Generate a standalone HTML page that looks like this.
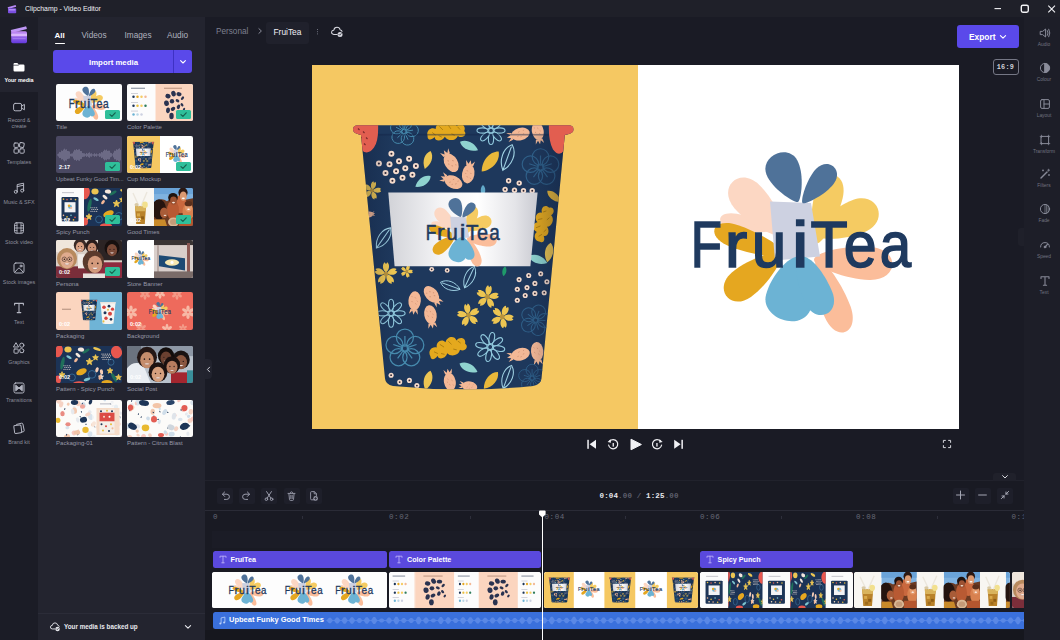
<!DOCTYPE html>
<html>
<head>
<meta charset="utf-8">
<title>Clipchamp - Video Editor</title>
<style>
*{box-sizing:border-box;margin:0;padding:0}
html,body{width:1060px;height:640px;overflow:hidden;background:#1a1b25;font-family:"Liberation Sans",sans-serif;color:#fff}
.abs{position:absolute}
#app{position:relative;width:1060px;height:640px;overflow:hidden;background:#1a1b25}
/* title bar */
#titlebar{left:0;top:0;width:1060px;height:17px;background:#1f2029}
#titlebar .t{left:25px;top:3.8px;font-size:7.6px;line-height:10px;color:#f2f2f6;white-space:nowrap;transform-origin:0 50%;transform:scaleX(.905)}
/* left nav */
#nav{left:0;top:17px;width:38px;height:623px;background:#1b1c26}
#nav .sel{left:0;top:33px;width:38px;height:42px;background:#23242f}
#nav .logo{left:0;top:0;width:38px;height:33px;background:#1d1e28}
.nl{position:absolute;left:-4px;width:46px;text-align:center;font-size:5.4px;line-height:6px;color:#8d8f9c;margin-top:.2px}
.ni{position:absolute;left:12px;width:14px;height:14px}
/* media panel */
#media{left:38px;top:17px;width:167px;height:623px;background:#23242f}
.tab{position:absolute;top:14px;font-size:8.25px;line-height:10px;color:#b0b2bf}
.thumb{position:absolute;width:66px;height:37.5px;border-radius:2px;overflow:hidden}
.tl{position:absolute;font-size:6.05px;line-height:7px;color:#9698a7;white-space:nowrap;margin-top:1px}
.chk{position:absolute;right:2px;bottom:2px;width:15px;height:9px;border-radius:1.5px;background:#2fbf9a}
.dur{position:absolute;left:3px;bottom:2px;font-size:5.5px;line-height:7px;color:#fff;font-weight:bold}
/* header */
#header{left:205px;top:17px;width:819px;height:31px}
/* right bar */
#right{z-index:5;left:1024px;top:17px;width:36px;height:623px;background:#1d1e28}
.rl{position:absolute;left:2px;width:36px;text-align:center;font-size:4.9px;line-height:6px;color:#717380}
.ri{position:absolute;left:14.5px;width:12px;height:12px}
/* preview */
#preview{left:312px;top:64.5px;width:647px;height:364.5px;background:#fff;overflow:hidden}
#preview .y{left:0;top:0;width:326px;height:365px;background:#f5c862}
/* timeline */
#tl{left:205px;top:479.5px;width:819px;height:160.5px;background:#191a23;border-top:1px solid #21222c}
.ttrack{position:absolute;height:17px;border-radius:2.5px;background:#5a49dd;font-weight:bold;font-size:7.2px;line-height:17px;color:#fff;padding-left:18px;white-space:nowrap}
.vtrack{position:absolute;top:572px;height:36px;border-radius:2.5px;overflow:hidden;background:#fff}
.rt{position:absolute;top:512px;font-family:"Liberation Mono",monospace;font-size:7.5px;line-height:10px;color:#666875;letter-spacing:.6px}
</style>
</head>
<body>
<div id="app">


<!-- SHARED SVG DEFS -->
<svg width="0" height="0" style="position:absolute">
<defs>
  <!-- flower logo: local coords = page px relative to (680,140) of big logo -->
  <g id="flower">
    <path d="M0 0 C3.5 0 8.5 -23.1 8.0 -39.6 C7.4 -60.0 -7.4 -60.0 -8.0 -39.6 C-8.5 -23.1 -3.5 0 0 0Z" transform="translate(94 89) rotate(-78.5)" fill="#fcd7c3"/>
    <path d="M0 0 C7.5 0 18.0 -30.7 17.0 -52.6 C15.6 -79.6 -15.6 -79.6 -17.0 -52.6 C-18.0 -30.7 -7.5 0 0 0Z" transform="translate(103 94) rotate(-43.6)" fill="#fcd7c3"/>
    <path d="M0 0 C7.3 0 17.5 -33.1 16.5 -56.7 C15.2 -85.8 -15.2 -85.8 -16.5 -56.7 C-17.5 -33.1 -7.3 0 0 0Z" transform="translate(134 119) rotate(94)" fill="#fbbd9a"/>
    <path d="M0 0 C6.2 0 14.8 -32.8 14.0 -56.2 C12.9 -85.0 -12.9 -85.0 -14.0 -56.2 C-14.8 -32.8 -6.2 0 0 0Z" transform="translate(137.5 118.8) rotate(159)" fill="#fbbd9a"/>
    <path d="M0 0 C7.5 0 18.0 -29.0 17.0 -49.7 C15.6 -75.2 -15.6 -75.2 -17.0 -49.7 C-18.0 -29.0 -7.5 0 0 0Z" transform="translate(134 94) rotate(67.5)" fill="#f5cb62"/>
    <path d="M0 0 C6.2 0 14.8 -29.8 14.0 -51.1 C12.9 -77.4 -12.9 -77.4 -14.0 -51.1 C-14.8 -29.8 -6.2 0 0 0Z" transform="translate(136 103) rotate(15)" fill="#f5cb62"/>
    <path d="M0 0 C5.1 0 12.2 -31.5 11.5 -54.0 C10.6 -81.8 -10.6 -81.8 -11.5 -54.0 C-12.2 -31.5 -5.1 0 0 0Z" transform="translate(105 114) rotate(-70)" fill="#e5a720"/>
    <path d="M0 0 C6.8 0 16.4 -28.6 15.5 -49.0 C14.3 -74.1 -14.3 -74.1 -15.5 -49.0 C-16.4 -28.6 -6.8 0 0 0Z" transform="translate(100 114) rotate(-128)" fill="#e5a720"/>
    <path d="M90 61 L131 62.5 L140 116 L95 120 Z" fill="#cdd1e1"/>
    <path d="M0 0 C14.1 0 24.9 -28.1 23.5 -48.2 C21.6 -73.0 -21.6 -73.0 -23.5 -48.2 C-24.9 -28.1 -14.1 0 0 0Z" transform="translate(124 116) rotate(-161)" fill="#6cb3d4"/>
    <path d="M0 0 C10.1 0 15.4 -26.0 14.5 -44.6 C13.3 -67.6 -13.3 -67.6 -14.5 -44.6 C-15.4 -26.0 -10.1 0 0 0Z" transform="translate(121 117) rotate(156)" fill="#6cb3d4"/>
    <path d="M0 0 C3.4 0 18.0 -22.3 17.0 -38.2 C15.6 -57.8 -15.6 -57.8 -17.0 -38.2 C-18.0 -22.3 -3.4 0 0 0Z" transform="translate(118 61.5) rotate(-25)" fill="#4f7299"/>
    <path d="M0 0 C2.8 0 12.2 -20.2 11.5 -34.6 C10.6 -52.3 -10.6 -52.3 -11.5 -34.6 C-12.2 -20.2 -2.8 0 0 0Z" transform="translate(122.5 62.5) rotate(40)" fill="#4f7299"/>
  </g>

  <!-- pattern elements (unit-ish sizes, centered at 0,0) -->
  <g id="of"><g fill="none" stroke-width=".8">
    <circle cx="0" cy="-7" r="5.5"/><circle cx="6.7" cy="-2.2" r="5.5"/><circle cx="4.1" cy="5.7" r="5.5"/><circle cx="-4.1" cy="5.7" r="5.5"/><circle cx="-6.7" cy="-2.2" r="5.5"/>
    <circle cx="0" cy="0" r="2.2"/><path d="M0-2.5V-8M2.4-.8L7.5-2.5M1.5 2L4.7 6.4M-1.5 2L-4.7 6.4M-2.4-.8L-7.5-2.5"/></g></g>
  <g id="od"><g fill="none" stroke-width="1.1">
    <ellipse cx="0" cy="-8.5" rx="2.6" ry="5.5"/><ellipse cx="0" cy="-8.5" rx="2.6" ry="5.5" transform="rotate(45)"/><ellipse cx="0" cy="-8.5" rx="2.6" ry="5.5" transform="rotate(90)"/><ellipse cx="0" cy="-8.5" rx="2.6" ry="5.5" transform="rotate(135)"/><ellipse cx="0" cy="-8.5" rx="2.6" ry="5.5" transform="rotate(180)"/><ellipse cx="0" cy="-8.5" rx="2.6" ry="5.5" transform="rotate(225)"/><ellipse cx="0" cy="-8.5" rx="2.6" ry="5.5" transform="rotate(270)"/><ellipse cx="0" cy="-8.5" rx="2.6" ry="5.5" transform="rotate(315)"/>
    <circle r="2.4"/></g></g>
  <g id="yf"><g fill="#ecc552"><path d="M0 -1C-4.2 -4.5 -3.6 -10 -1.2 -11.5L0 -9.6L1.2 -11.5C3.6 -10 4.2 -4.5 0 -1Z" transform="rotate(0)"/><path d="M0 -1C-4.2 -4.5 -3.6 -10 -1.2 -11.5L0 -9.6L1.2 -11.5C3.6 -10 4.2 -4.5 0 -1Z" transform="rotate(72)"/><path d="M0 -1C-4.2 -4.5 -3.6 -10 -1.2 -11.5L0 -9.6L1.2 -11.5C3.6 -10 4.2 -4.5 0 -1Z" transform="rotate(144)"/><path d="M0 -1C-4.2 -4.5 -3.6 -10 -1.2 -11.5L0 -9.6L1.2 -11.5C3.6 -10 4.2 -4.5 0 -1Z" transform="rotate(216)"/><path d="M0 -1C-4.2 -4.5 -3.6 -10 -1.2 -11.5L0 -9.6L1.2 -11.5C3.6 -10 4.2 -4.5 0 -1Z" transform="rotate(288)"/></g><circle r="2.4" fill="#b8933c"/></g>
  <g id="pf"><ellipse cx="0" cy="1.5" rx="6.2" ry="9.5" fill="#f3b896"/><path d="M-3.5-7L-4.5-12L-1.5-8.5L0-12.5L1.5-8.5L4.5-12L3.5-7Z" fill="#f3b896"/><path d="M-2-2l1 1M2 0l1 1M-1 4l1 1M2.5 5l.8 .8M-3 1l.8 .8" stroke="#c98a6c" stroke-width=".7"/></g>
  <g id="gg"><path d="M-19 3C-20-3-14-6-10-3C-9-9-2-10 0-5C3-10 11-9 11-3C16-6 21-2 18 3C21 7 15 11 11 7C8 12 0 11 -2 6C-6 11-13 9-12 5C-16 8-20 7-19 3Z" fill="#e4a91e"/><path d="M-14 0l3 3M-6-5l3 4M3-5l2 4M12-2l2 3M-8 4l3 2M5 4l3 2" stroke="#a87a10" stroke-width=".8" fill="none"/></g>
  <g id="dot"><circle r="3" fill="#f6dccd"/><circle r="1.05" fill="#2c2433"/></g>
  <path id="lf" d="M0-11C6-6 6 4 0 11C-6 4-6-6 0-11Z"/>
  <path id="ol" d="M0-13C7-7 7 5 0 13C-7 5-7-7 0-13ZM0-11V13" fill="none" stroke-width="1.1"/>
  <g id="ltext"><g font-family="Liberation Sans, sans-serif" font-size="65" fill="#1f3a5f" stroke="#1f3a5f" stroke-width="1.6">
    <text transform="translate(10.63 126.6) scale(0.786 1)">F</text><text transform="translate(44.72 126.6) scale(1.043 1)">r</text><text transform="translate(71.78 126.6) scale(0.957 1)">u</text><text transform="translate(111.76 126.6) scale(1.172 1)">i</text><text transform="translate(130.39 126.6) scale(0.937 1)">T</text><text transform="translate(163.85 126.6) scale(0.911 1)">e</text><text transform="translate(199.87 126.6) scale(0.868 1)">a</text>
    </g></g>
  <g id="logo"><use href="#flower"/><use href="#ltext"/></g>
</defs>
</svg>

<!-- TITLEBAR -->
<div id="titlebar" class="abs">
  <svg class="abs" style="left:7px;top:4px" width="10" height="10" viewBox="0 0 10 10"><path d="M0.6 3.2L8.6 1L9.2 2.8L1.2 5Z" fill="#b98af5"/><rect x="1" y="4.2" width="8.2" height="5" rx=".8" fill="#7a4fe0"/><rect x="1.8" y="5.3" width="6.6" height="1.1" fill="#c8a4ff"/></svg>
  <div class="abs t">Clipchamp - Video Editor</div>
  <svg class="abs" style="left:990px;top:3px" width="70" height="12" viewBox="990 3 70 12" fill="none" stroke="#f2f2f5" stroke-width="1.1"><path d="M994.5 8.6H1001"/><rect x="1021.3" y="5.2" width="7" height="7" rx="1.6" stroke-width="1.4"/><path d="M1048.3 5.6L1055 12.3M1055 5.6L1048.3 12.3"/></svg>
</div>

<!-- LEFT NAV -->
<div id="nav" class="abs">
  <div class="abs logo"><svg class="abs" style="left:10px;top:8px" width="18" height="19" viewBox="0 0 18 19"><defs><linearGradient id="lg1" x1="0" y1="0" x2="0" y2="1"><stop offset="0" stop-color="#c58df4"/><stop offset="1" stop-color="#6238dc"/></linearGradient></defs><path d="M.8 4.9L15.4 1.4Q16.2 1.2 16.4 2L16.9 4.1L1.5 7.9Z" fill="#bf97f6"/><rect x="1.2" y="6.2" width="15.8" height="12" rx="1.6" fill="url(#lg1)"/><rect x="1.2" y="8.6" width="15.8" height="2.6" fill="#e3c2ff" opacity=".85"/><rect x="2.6" y="13" width="13" height="1.2" fill="#b48af5" opacity=".6"/></svg></div>
  <div class="abs sel"></div>
  <svg class="ni" style="top:43px" viewBox="0 0 14 14" fill="none" stroke="#ffffff" stroke-width="1" stroke-linecap="round" stroke-linejoin="round"><path d="M1.5 4.2Q1.5 3 2.7 3H5.3L6.8 4.6H11.3Q12.5 4.6 12.5 5.8V10.3Q12.5 11.5 11.3 11.5H2.7Q1.5 11.5 1.5 10.3Z" fill="#fff" stroke="none"/><path d="M1.5 5.2H6.2L7.2 4.4" stroke="#23242f" stroke-width=".7"/></svg>
  <div class="nl" style="top:59.8px;color:#fff;font-weight:bold;">Your media</div>
  <svg class="ni" style="top:83px" viewBox="0 0 14 14" fill="none" stroke="#b4b6c2" stroke-width="1" stroke-linecap="round" stroke-linejoin="round"><rect x="1.6" y="3.4" width="8" height="7.4" rx="1.6"/><path d="M9.6 6.1L12.4 4.4V9.8L9.6 8.1"/></svg>
  <div class="nl" style="top:99.4px;">Record &amp;<br>create</div>
  <svg class="ni" style="top:124px" viewBox="0 0 14 14" fill="none" stroke="#b4b6c2" stroke-width="1" stroke-linecap="round" stroke-linejoin="round"><rect x="2" y="2" width="4.4" height="4.4" rx="1"/><rect x="2" y="7.8" width="4.4" height="4.4" rx="1"/><rect x="7.8" y="7.8" width="4.4" height="4.4" rx="1"/><rect x="7.6" y="1.8" width="4.4" height="4.4" rx="1" transform="rotate(12 9.8 4)"/></svg>
  <div class="nl" style="top:142px;">Templates</div>
  <svg class="ni" style="top:164px" viewBox="0 0 14 14" fill="none" stroke="#b4b6c2" stroke-width="1" stroke-linecap="round" stroke-linejoin="round"><path d="M5.2 10.6V3.6L11.6 2.2V9.4"/><circle cx="3.8" cy="10.8" r="1.5"/><circle cx="10.2" cy="9.6" r="1.5"/><path d="M5.2 5.6L11.6 4.2"/></svg>
  <div class="nl" style="top:182px;">Music &amp; SFX</div>
  <svg class="ni" style="top:204px" viewBox="0 0 14 14" fill="none" stroke="#b4b6c2" stroke-width="1" stroke-linecap="round" stroke-linejoin="round"><rect x="2.6" y="1.8" width="8.8" height="10.4" rx="1.6"/><path d="M5 1.8V12.2M9 1.8V12.2M5 7H9M2.6 4.4H5M2.6 7H5M2.6 9.6H5M9 4.4H11.4M9 7H11.4M9 9.6H11.4" stroke-width=".8"/></svg>
  <div class="nl" style="top:222px;">Stock video</div>
  <svg class="ni" style="top:244px" viewBox="0 0 14 14" fill="none" stroke="#b4b6c2" stroke-width="1" stroke-linecap="round" stroke-linejoin="round"><rect x="2" y="2" width="10" height="10" rx="1.8"/><circle cx="9" cy="5" r="1"/><path d="M3 11L6.2 7.4Q7 6.6 7.8 7.4L11 11"/></svg>
  <div class="nl" style="top:262px;">Stock images</div>
  <svg class="ni" style="top:284px" viewBox="0 0 14 14" fill="none" stroke="#b4b6c2" stroke-width="1" stroke-linecap="round" stroke-linejoin="round"><path d="M2.6 4V2.4H11.4V4M7 2.4V11.6M5.2 11.6H8.8" stroke-width="1.1"/></svg>
  <div class="nl" style="top:302px;">Text</div>
  <svg class="ni" style="top:324px" viewBox="0 0 14 14" fill="none" stroke="#b4b6c2" stroke-width="1" stroke-linecap="round" stroke-linejoin="round"><path d="M4.2 2L6.6 6H1.8Z"/><circle cx="9.8" cy="4.2" r="2.1"/><rect x="2" y="8" width="4.2" height="4.2" rx=".8"/><path d="M9.8 7.6L12 9L11.2 11.6H8.4L7.6 9Z"/></svg>
  <div class="nl" style="top:342px;">Graphics</div>
  <svg class="ni" style="top:364px" viewBox="0 0 14 14" fill="none" stroke="#b4b6c2" stroke-width="1" stroke-linecap="round" stroke-linejoin="round"><rect x="2" y="2" width="10" height="10" rx="1.6"/><path d="M4 4.4L7 7L4 9.6ZM10 4.4L7 7L10 9.6Z" fill="#b4b6c2"/></svg>
  <div class="nl" style="top:380px;">Transitions</div>
  <svg class="ni" style="top:404px" viewBox="0 0 14 14" fill="none" stroke="#b4b6c2" stroke-width="1" stroke-linecap="round" stroke-linejoin="round"><path d="M4.6 3.4L9.6 2.2Q10.6 2 10.9 3L12.2 9.4Q12.4 10.4 11.4 10.7L9.8 11"/><rect x="2.2" y="4.2" width="7.2" height="8" rx="1.2" transform="rotate(-8 5.8 8.2)"/></svg>
  <div class="nl" style="top:422px;">Brand kit</div>
</div>

<!-- MEDIA PANEL -->
<svg width="0" height="0" style="position:absolute"><defs>
  <symbol id="t_logo" viewBox="0 0 66 37.5" preserveAspectRatio="none"><rect width="66" height="37.5" fill="#fdfdfd"/><use href="#logo" transform="translate(10.92 0.48) scale(0.181)"/></symbol>
  <symbol id="t_pal" viewBox="0 0 66 37.5" preserveAspectRatio="none"><rect width="66" height="37.5" fill="#fcfcfc"/><rect x="28.5" width="37.5" height="37.5" fill="#fbd5bf"/><rect x="4" y="3.6" width="14" height="1.3" fill="#9aa0ad"/><rect x="37" y="3.6" width="18" height="1.3" fill="#c9a08c"/><circle cx="6.5" cy="12.5" r="1.25" fill="#1d3557"/><circle cx="10.5" cy="12.5" r="1.25" fill="#e5a720"/><circle cx="14.5" cy="12.5" r="1.25" fill="#f5cb62"/><circle cx="18.5" cy="12.5" r="1.25" fill="#f3b896"/><circle cx="6.5" cy="21.5" r="1.25" fill="#1d3557"/><circle cx="10.5" cy="21.5" r="1.25" fill="#e8bf3f"/><circle cx="14.5" cy="21.5" r="1.25" fill="#f5cb62"/><circle cx="18.5" cy="21.5" r="1.25" fill="#2f7d5b"/><circle cx="6.5" cy="30" r="1.25" fill="#6cb3d4"/><circle cx="10.5" cy="30" r="1.25" fill="#b9d7e6"/><circle cx="14.5" cy="30" r="1.25" fill="#cdd1e1"/><rect x="4" y="9" width="7" height=".8" fill="#c6c8d0"/><rect x="4" y="17.8" width="7" height=".8" fill="#c6c8d0"/><rect x="4" y="26.3" width="7" height=".8" fill="#c6c8d0"/><ellipse cx="41" cy="12" rx="2.6" ry="2.2" transform="rotate(20 41 12)" fill="#2a3350"/><ellipse cx="46.5" cy="9.5" rx="2.2" ry="2.8" transform="rotate(-20 46.5 9.5)" fill="#2a3350"/><ellipse cx="52" cy="10" rx="2.6" ry="2" transform="rotate(10 52 10)" fill="#2a3350"/><ellipse cx="39.5" cy="19" rx="2.4" ry="2.8" transform="rotate(-10 39.5 19)" fill="#2a3350"/><ellipse cx="45" cy="17" rx="2.2" ry="2.2" transform="rotate(0 45 17)" fill="#2a3350"/><ellipse cx="50.5" cy="16.5" rx="2" ry="1.4" transform="rotate(30 50.5 16.5)" fill="#2a3350"/><ellipse cx="55.5" cy="14" rx="1.2" ry="2" transform="rotate(40 55.5 14)" fill="#2a3350"/><ellipse cx="41" cy="26" rx="2" ry="2.8" transform="rotate(10 41 26)" fill="#2a3350"/><ellipse cx="46" cy="24.5" rx="2.4" ry="1.8" transform="rotate(-30 46 24.5)" fill="#2a3350"/><ellipse cx="51.5" cy="22.5" rx="1.6" ry="2.4" transform="rotate(20 51.5 22.5)" fill="#2a3350"/><ellipse cx="44.5" cy="31.5" rx="2.2" ry="3.2" transform="rotate(0 44.5 31.5)" fill="#2a3350"/><ellipse cx="55" cy="20.5" rx="1.2" ry="1.8" transform="rotate(-40 55 20.5)" fill="#2a3350"/><ellipse cx="57" cy="25" rx="1" ry="1.6" transform="rotate(30 57 25)" fill="#2a3350"/></symbol>
  <symbol id="t_audio" viewBox="0 0 66 37.5" preserveAspectRatio="none"><rect width="66" height="37.5" fill="#4a4862"/><rect x="1.0" y="18.1" width="1" height="1.2" fill="#6c6a85"/><rect x="2.0" y="17.3" width="1" height="3.0" fill="#6c6a85"/><rect x="3.0" y="15.7" width="1" height="6.1" fill="#6c6a85"/><rect x="4.0" y="15.9" width="1" height="5.8" fill="#6c6a85"/><rect x="5.0" y="14.3" width="1" height="8.9" fill="#6c6a85"/><rect x="6.0" y="14.7" width="1" height="8.2" fill="#6c6a85"/><rect x="7.0" y="13.4" width="1" height="10.6" fill="#6c6a85"/><rect x="8.0" y="12.5" width="1" height="12.6" fill="#6c6a85"/><rect x="9.0" y="13.5" width="1" height="10.5" fill="#6c6a85"/><rect x="10.0" y="13.1" width="1" height="11.2" fill="#6c6a85"/><rect x="11.0" y="14.8" width="1" height="7.9" fill="#6c6a85"/><rect x="12.0" y="14.9" width="1" height="7.6" fill="#6c6a85"/><rect x="13.0" y="15.3" width="1" height="6.9" fill="#6c6a85"/><rect x="14.0" y="17.6" width="1" height="2.4" fill="#6c6a85"/><rect x="15.0" y="17.3" width="1" height="3.0" fill="#6c6a85"/><rect x="16.0" y="17.1" width="1" height="3.3" fill="#6c6a85"/><rect x="17.0" y="15.3" width="1" height="7.0" fill="#6c6a85"/><rect x="18.0" y="13.6" width="1" height="10.2" fill="#6c6a85"/><rect x="19.0" y="14.0" width="1" height="9.5" fill="#6c6a85"/><rect x="20.0" y="12.9" width="1" height="11.7" fill="#6c6a85"/><rect x="21.0" y="13.8" width="1" height="9.8" fill="#6c6a85"/><rect x="22.0" y="13.3" width="1" height="10.9" fill="#6c6a85"/><rect x="23.0" y="13.1" width="1" height="11.4" fill="#6c6a85"/><rect x="24.0" y="14.8" width="1" height="8.0" fill="#6c6a85"/><rect x="25.0" y="14.9" width="1" height="7.7" fill="#6c6a85"/><rect x="26.0" y="16.8" width="1" height="3.9" fill="#6c6a85"/><rect x="27.0" y="17.0" width="1" height="3.5" fill="#6c6a85"/><rect x="28.0" y="17.1" width="1" height="3.3" fill="#6c6a85"/><rect x="29.0" y="17.9" width="1" height="1.6" fill="#6c6a85"/><rect x="30.0" y="16.7" width="1" height="4.0" fill="#6c6a85"/><rect x="31.0" y="17.5" width="1" height="2.5" fill="#6c6a85"/><rect x="32.0" y="16.7" width="1" height="4.2" fill="#6c6a85"/><rect x="33.0" y="16.1" width="1" height="5.4" fill="#6c6a85"/><rect x="34.0" y="17.4" width="1" height="2.8" fill="#6c6a85"/><rect x="35.0" y="17.0" width="1" height="3.5" fill="#6c6a85"/><rect x="36.0" y="18.1" width="1" height="1.2" fill="#6c6a85"/><rect x="37.0" y="18.0" width="1" height="1.5" fill="#6c6a85"/><rect x="38.0" y="17.0" width="1" height="3.5" fill="#6c6a85"/><rect x="39.0" y="17.9" width="1" height="1.8" fill="#6c6a85"/><rect x="40.0" y="17.2" width="1" height="3.2" fill="#6c6a85"/><rect x="41.0" y="18.1" width="1" height="1.2" fill="#6c6a85"/><rect x="42.0" y="18.0" width="1" height="1.4" fill="#6c6a85"/><rect x="43.0" y="16.8" width="1" height="3.9" fill="#6c6a85"/><rect x="44.0" y="17.2" width="1" height="3.1" fill="#6c6a85"/><rect x="45.0" y="15.8" width="1" height="6.0" fill="#6c6a85"/><rect x="46.0" y="16.1" width="1" height="5.3" fill="#6c6a85"/><rect x="47.0" y="14.7" width="1" height="8.1" fill="#6c6a85"/><rect x="48.0" y="13.5" width="1" height="10.5" fill="#6c6a85"/><rect x="49.0" y="14.2" width="1" height="9.1" fill="#6c6a85"/><rect x="50.0" y="13.4" width="1" height="10.6" fill="#6c6a85"/><rect x="51.0" y="14.7" width="1" height="8.1" fill="#6c6a85"/><rect x="52.0" y="14.5" width="1" height="8.6" fill="#6c6a85"/><rect x="53.0" y="14.5" width="1" height="8.5" fill="#6c6a85"/><rect x="54.0" y="16.5" width="1" height="4.5" fill="#6c6a85"/><rect x="55.0" y="16.9" width="1" height="3.6" fill="#6c6a85"/><rect x="56.0" y="18.1" width="1" height="1.2" fill="#6c6a85"/><rect x="57.0" y="16.4" width="1" height="4.8" fill="#6c6a85"/><rect x="58.0" y="14.5" width="1" height="8.5" fill="#6c6a85"/><rect x="59.0" y="14.6" width="1" height="8.4" fill="#6c6a85"/><rect x="60.0" y="13.1" width="1" height="11.4" fill="#6c6a85"/><rect x="61.0" y="13.6" width="1" height="10.3" fill="#6c6a85"/><rect x="62.0" y="12.7" width="1" height="12.1" fill="#6c6a85"/><rect x="63.0" y="12.1" width="1" height="13.3" fill="#6c6a85"/><rect x="64.0" y="13.6" width="1" height="10.4" fill="#6c6a85"/></symbol>
  <symbol id="t_cupm" viewBox="0 0 66 37.5" preserveAspectRatio="none"><rect width="66" height="37.5" fill="#fff"/><rect width="33" height="37.5" fill="#f5c862"/><use href="#cup" transform="translate(5.4 5.6) scale(0.1) translate(-353 -124.6)"/><use href="#logo" transform="translate(37.60 7.60) scale(0.1)"/></symbol>
  <symbol id="t_spicy" viewBox="0 0 66 37.5" preserveAspectRatio="none"><g transform="translate(27 0)"><rect width="66" height="37.5" fill="#1c3356"/><ellipse cx="2.5" cy="5" rx="4.2" ry="6.2" transform="rotate(15 2.5 5)" fill="#e8574e"/><ellipse cx="60.5" cy="6" rx="5.5" ry="6.2" transform="rotate(-15 60.5 6)" fill="#e8574e"/><ellipse cx="23" cy="37" rx="6" ry="2.2" transform="rotate(0 23 37)" fill="#e8574e"/><ellipse cx="2" cy="33" rx="3" ry="4" transform="rotate(0 2 33)" fill="#e8574e"/><ellipse cx="6.5" cy="17" rx="1.8" ry="6.5" transform="rotate(12 6.5 17)" fill="#1f6f5a"/><ellipse cx="58" cy="31" rx="1.6" ry="5" transform="rotate(-30 58 31)" fill="#1f6f5a"/><ellipse cx="30" cy="5" rx="1.4" ry="4" transform="rotate(60 30 5)" fill="#1f6f5a"/><ellipse cx="12" cy="3.5" rx="3.6" ry="3" transform="rotate(0 12 3.5)" fill="#ecc552"/><ellipse cx="25.5" cy="25.5" rx="5.5" ry="3" transform="rotate(-22 25.5 25.5)" fill="#e5a720"/><ellipse cx="51" cy="36" rx="5.5" ry="2.4" transform="rotate(0 51 36)" fill="#e5a720"/><ellipse cx="41" cy="3" rx="4" ry="1.4" transform="rotate(20 41 3)" fill="#ecc552"/><path d="M33.5 11.9 L34.5 14.2 L36.9 14.4 L35.0 16.0 L35.6 18.4 L33.5 17.1 L31.4 18.4 L32.0 16.0 L30.1 14.4 L32.5 14.2Z" fill="#ecc552" stroke="#ecc552" stroke-width=".8" stroke-linejoin="round"/><path d="M39.5 8.5 L40.3 10.4 L42.4 10.6 L40.8 11.9 L41.3 13.9 L39.5 12.8 L37.7 13.9 L38.2 11.9 L36.6 10.6 L38.7 10.4Z" fill="#ecc552" stroke="#ecc552" stroke-width=".8" stroke-linejoin="round"/><path d="M6.0 25.3 L6.8 27.3 L9.0 27.5 L7.4 28.9 L7.9 31.1 L6.0 29.9 L4.1 31.1 L4.6 28.9 L3.0 27.5 L5.2 27.3Z" fill="#ecc552" stroke="#ecc552" stroke-width=".8" stroke-linejoin="round"/><path d="M54.0 21.5 L54.8 23.4 L56.9 23.6 L55.3 24.9 L55.8 26.9 L54.0 25.9 L52.2 26.9 L52.7 24.9 L51.1 23.6 L53.2 23.4Z" fill="#ecc552" stroke="#ecc552" stroke-width=".8" stroke-linejoin="round"/><path d="M62.5 28.0 L63.3 29.9 L65.4 30.1 L63.8 31.4 L64.3 33.4 L62.5 32.4 L60.7 33.4 L61.2 31.4 L59.6 30.1 L61.7 29.9Z" fill="#ecc552" stroke="#ecc552" stroke-width=".8" stroke-linejoin="round"/><path d="M45.0 27.9 L45.7 29.6 L47.5 29.7 L46.1 30.9 L46.5 32.6 L45.0 31.7 L43.5 32.6 L43.9 30.9 L42.5 29.7 L44.3 29.6Z" fill="#f3e6dc" stroke="#f3e6dc" stroke-width=".8" stroke-linejoin="round"/><ellipse cx="41" cy="23.5" rx="1.6" ry="2.6" transform="rotate(20 41 23.5)" fill="#f6cdb6"/><ellipse cx="45.5" cy="25.5" rx="1.6" ry="2.6" transform="rotate(-10 45.5 25.5)" fill="#f6cdb6"/><ellipse cx="44" cy="31" rx="1.5" ry="2.4" transform="rotate(10 44 31)" fill="#f3b896"/><ellipse cx="20" cy="14" rx="1.4" ry="2.4" transform="rotate(40 20 14)" fill="#f3b896"/><ellipse cx="25" cy="3.5" rx="3.2" ry="2" transform="rotate(10 25 3.5)" fill="#f3e6dc"/><ellipse cx="22" cy="9" rx="1.5" ry="3" transform="rotate(-50 22 9)" fill="#f3e6dc"/><circle cx="46.0" cy="8.0" r="0.55" fill="#f3e6dc"/><circle cx="47.0" cy="9.7" r="0.55" fill="#f3e6dc"/><circle cx="46.0" cy="11.4" r="0.55" fill="#f3e6dc"/><circle cx="47.0" cy="13.1" r="0.55" fill="#f3e6dc"/><circle cx="47.9" cy="8.0" r="0.55" fill="#f3e6dc"/><circle cx="48.9" cy="9.7" r="0.55" fill="#f3e6dc"/><circle cx="47.9" cy="11.4" r="0.55" fill="#f3e6dc"/><circle cx="48.9" cy="13.1" r="0.55" fill="#f3e6dc"/><circle cx="49.8" cy="8.0" r="0.55" fill="#f3e6dc"/><circle cx="50.8" cy="9.7" r="0.55" fill="#f3e6dc"/><circle cx="49.8" cy="11.4" r="0.55" fill="#f3e6dc"/><circle cx="50.8" cy="13.1" r="0.55" fill="#f3e6dc"/><circle cx="51.7" cy="8.0" r="0.55" fill="#f3e6dc"/><circle cx="52.7" cy="9.7" r="0.55" fill="#f3e6dc"/><circle cx="51.7" cy="11.4" r="0.55" fill="#f3e6dc"/><circle cx="52.7" cy="13.1" r="0.55" fill="#f3e6dc"/><circle cx="53.6" cy="8.0" r="0.55" fill="#f3e6dc"/><circle cx="54.6" cy="9.7" r="0.55" fill="#f3e6dc"/><circle cx="53.6" cy="11.4" r="0.55" fill="#f3e6dc"/><circle cx="54.6" cy="13.1" r="0.55" fill="#f3e6dc"/><circle cx="8.0" cy="19.5" r="0.55" fill="#f3e6dc"/><circle cx="8.9" cy="21.2" r="0.55" fill="#f3e6dc"/><circle cx="8.0" cy="22.9" r="0.55" fill="#f3e6dc"/><circle cx="9.9" cy="19.5" r="0.55" fill="#f3e6dc"/><circle cx="10.8" cy="21.2" r="0.55" fill="#f3e6dc"/><circle cx="9.9" cy="22.9" r="0.55" fill="#f3e6dc"/><circle cx="11.8" cy="19.5" r="0.55" fill="#f3e6dc"/><circle cx="12.8" cy="21.2" r="0.55" fill="#f3e6dc"/><circle cx="11.8" cy="22.9" r="0.55" fill="#f3e6dc"/><circle cx="13.7" cy="19.5" r="0.55" fill="#f3e6dc"/><circle cx="14.6" cy="21.2" r="0.55" fill="#f3e6dc"/><circle cx="13.7" cy="22.9" r="0.55" fill="#f3e6dc"/><circle cx="36" cy="28" r="3.8" fill="none" stroke="#3f7aa6" stroke-width=".7"/><circle cx="16" cy="31" r="3.4" fill="none" stroke="#3f7aa6" stroke-width=".7"/><circle cx="55" cy="16" r="3" fill="none" stroke="#3f7aa6" stroke-width=".7"/><ellipse cx="31" cy="33" rx="3.4" ry="1.4" transform="rotate(-20 31 33)" fill="#7ec4cf"/><ellipse cx="13" cy="11" rx="3" ry="1.2" transform="rotate(30 13 11)" fill="#7ec4cf"/></g><rect width="28" height="37.5" fill="#fbfbfb"/><rect x="6" y="4" width="12" height="1.1" fill="#c9c9cf"/><rect x="5.5" y="9" width="17" height="24" rx="1" fill="#1d3557"/><rect x="8.5" y="14" width="11" height="10" fill="#f3f3f5"/><circle cx="7.5" cy="11" r=".8" fill="#e8bf3f"/><circle cx="11" cy="11.5" r=".8" fill="#e15a4f"/><circle cx="15" cy="11" r=".8" fill="#f3b896"/><circle cx="19.5" cy="11.5" r=".8" fill="#e8bf3f"/><circle cx="7.5" cy="27" r=".8" fill="#f3b896"/><circle cx="11" cy="28.5" r=".8" fill="#e8bf3f"/><circle cx="15" cy="27" r=".8" fill="#7ec4cf"/><circle cx="19" cy="29" r=".8" fill="#e15a4f"/><circle cx="9" cy="31" r=".8" fill="#f6e3c8"/><circle cx="13" cy="31.2" r=".8" fill="#f3b896"/><circle cx="17.5" cy="31.5" r=".8" fill="#e8bf3f"/><circle cx="14" cy="18.5" r="2" fill="#6cb3d4"/><circle cx="13" cy="17.6" r="1.2" fill="#e5a720"/><circle cx="15.2" cy="19.6" r="1.1" fill="#fbbd9a"/></symbol>
  <symbol id="t_good" viewBox="0 0 66 37.5" preserveAspectRatio="none"><rect x="27" width="39" height="37.5" fill="#7fb2e0"/><rect x="27" y="0" width="39" height="6" fill="#6aa3d8"/><path d="M27 14Q34 9 40 13L46 9L56 12L66 10V37.5H27Z" fill="#6b3a22"/><ellipse cx="53.5" cy="16" rx="6" ry="9" transform="rotate(0 53.5 16)" fill="#c9683e"/><ellipse cx="46" cy="22" rx="6" ry="10" transform="rotate(0 46 22)" fill="#b85a33"/><ellipse cx="61" cy="24" rx="5.5" ry="9" transform="rotate(0 61 24)" fill="#d8814f"/><ellipse cx="56" cy="4.5" rx="4.6" ry="5" transform="rotate(0 56 4.5)" fill="#2a1712"/><ellipse cx="56.3" cy="8" rx="3.5" ry="4.6" transform="rotate(0 56.3 8)" fill="#dc9a72"/><ellipse cx="56.3" cy="10.2" rx="1.6" ry="0.8" transform="rotate(0 56.3 10.2)" fill="#fff"/><ellipse cx="46" cy="9.5" rx="4.8" ry="4.6" transform="rotate(0 46 9.5)" fill="#1f120e"/><ellipse cx="46.5" cy="12.5" rx="3.4" ry="4" transform="rotate(0 46.5 12.5)" fill="#9c5232"/><ellipse cx="46.5" cy="14.4" rx="1.5" ry="0.8" transform="rotate(0 46.5 14.4)" fill="#f4e6da"/><ellipse cx="32" cy="21" rx="7" ry="10" transform="rotate(0 32 21)" fill="#24140f"/><ellipse cx="37" cy="24.5" rx="4" ry="5.2" transform="rotate(0 37 24.5)" fill="#a85c38"/><ellipse cx="38" cy="27" rx="1.4" ry="0.7" transform="rotate(0 38 27)" fill="#f4e6da"/><ellipse cx="61.5" cy="19" rx="3.4" ry="4.4" transform="rotate(0 61.5 19)" fill="#e39a6c"/><ellipse cx="61.5" cy="15.5" rx="3.8" ry="2.6" transform="rotate(0 61.5 15.5)" fill="#5a2f1c"/><ellipse cx="61.5" cy="21" rx="1.3" ry="0.7" transform="rotate(0 61.5 21)" fill="#fff"/><path d="M27 31H38L40 37.5H27Z" fill="#c98a2a"/><ellipse cx="46.5" cy="33.5" rx="5.5" ry="4.5" transform="rotate(0 46.5 33.5)" fill="#d9b896"/><ellipse cx="46.5" cy="33.5" rx="3.5" ry="2.8" transform="rotate(0 46.5 33.5)" fill="#c49a78"/><rect x="52" y="30" width="14" height="7.5" fill="#b4562f"/><rect width="27" height="37.5" fill="#f8f6f2"/><path d="M8 18H19L17.8 35.5H9.2Z" fill="#b9822a"/><path d="M8 18H19L18.6 23H8.4Z" fill="#d9b35c"/><rect x="10" y="25" width="3" height="3" fill="#d9a94a"/><rect x="14" y="28" width="3" height="3" fill="#8f5e16"/><rect x="11" y="31" width="3" height="3" fill="#9c6a1c"/><path d="M6 5L12 18M20 4L14 18" stroke="#ebe6dc" stroke-width="1.4"/><ellipse cx="18" cy="16.5" rx="2.8" ry="3.2" transform="rotate(0 18 16.5)" fill="#f2e08e"/><ellipse cx="9.5" cy="16.5" rx="2" ry="1.6" transform="rotate(0 9.5 16.5)" fill="#d8c9a6"/></symbol>
  <symbol id="t_persona" viewBox="0 0 66 37.5" preserveAspectRatio="none"><rect width="66" height="37.5" fill="#d9cfc6"/><rect x="42" width="24" height="20" fill="#2c2424"/><rect y="0" width="20" height="12" fill="#efe6dc"/><ellipse cx="24.0" cy="5.2" rx="6.2" ry="6.5" fill="#3a2a26"/><ellipse cx="24" cy="7" rx="4.2" ry="5.0" fill="#d9a184"/><path d="M22.2 9.0Q24 10.8 25.8 9.0" fill="#fff" stroke="#7a3b36" stroke-width=".3"/><circle cx="22.4" cy="6.4" r="0.50" fill="#2a1a18"/><circle cx="25.6" cy="6.4" r="0.50" fill="#2a1a18"/><ellipse cx="36.0" cy="6.2" rx="6.5" ry="6.8" fill="#2a1c1a"/><ellipse cx="36" cy="8" rx="4.4" ry="5.2" fill="#c98f72"/><path d="M34.2 10.1Q36 11.9 37.8 10.1" fill="#fff" stroke="#7a3b36" stroke-width=".3"/><circle cx="34.3" cy="7.4" r="0.52" fill="#2a1a18"/><circle cx="37.7" cy="7.4" r="0.52" fill="#2a1a18"/><ellipse cx="56.0" cy="7.9" rx="7.5" ry="7.8" fill="#17100f"/><ellipse cx="56" cy="10" rx="5.1" ry="6.0" fill="#7a4a38"/><path d="M53.9 12.4Q56 14.5 58.1 12.4" fill="#fff" stroke="#7a3b36" stroke-width=".3"/><circle cx="54.0" cy="9.3" r="0.60" fill="#2a1a18"/><circle cx="58.0" cy="9.3" r="0.60" fill="#2a1a18"/><rect x="0" y="26" width="66" height="12" fill="#7b2e3a"/><rect x="44" y="22" width="22" height="16" fill="#8e2b3f"/><rect x="22" y="14" width="10" height="14" fill="#f1ece8"/><ellipse cx="11.0" cy="18.4" rx="10.0" ry="10.4" fill="#b88a5e"/><ellipse cx="11" cy="20" rx="6.8" ry="8.0" fill="#e0ab8e"/><path d="M8.2 23.2Q11 26.0 13.8 23.2" fill="#fff" stroke="#7a3b36" stroke-width=".3"/><circle cx="8.4" cy="19.0" r="0.80" fill="#2a1a18"/><circle cx="13.6" cy="19.0" r="0.80" fill="#2a1a18"/><circle cx="8.3" cy="19" r="2.2" fill="none" stroke="#2a1a18" stroke-width=".5"/><circle cx="13.7" cy="19" r="2.2" fill="none" stroke="#2a1a18" stroke-width=".5"/><ellipse cx="37.3" cy="21.4" rx="10.6" ry="11.1" fill="#5a3a2c"/><ellipse cx="39" cy="24" rx="7.2" ry="8.5" fill="#d39a7c"/><path d="M36.0 27.4Q39 30.4 42.0 27.4" fill="#fff" stroke="#7a3b36" stroke-width=".3"/><circle cx="36.2" cy="23.0" r="0.85" fill="#2a1a18"/><circle cx="41.8" cy="23.0" r="0.85" fill="#2a1a18"/><rect x="27" y="33" width="22" height="5" fill="#e8e1dc"/></symbol>
  <symbol id="t_store" viewBox="0 0 66 37.5" preserveAspectRatio="none"><rect width="66" height="37.5" fill="#fff"/><use href="#logo" transform="translate(3.63 9.16) scale(0.085)"/><rect x="27" width="39" height="37.5" fill="#d9cfcb"/><rect x="27" width="39" height="5" fill="#3a3434"/><rect x="30" y="5" width="2" height="33" fill="#b9a9a4"/><rect x="60" y="3" width="3" height="35" fill="#8d5a55"/><rect x="27" y="31" width="39" height="7" fill="#7a6b68"/><path d="M32 15L58 18V30L32 26Z" fill="#1d4a74"/><ellipse cx="45" cy="22.2" rx="7" ry="3.2" fill="#f6e7b0"/><circle cx="45" cy="22.2" r="1.6" fill="#fff"/></symbol>
  <symbol id="t_pack" viewBox="0 0 66 37.5" preserveAspectRatio="none"><rect width="66" height="37.5" fill="#fbd5bf"/><rect x="33.5" width="32.5" height="37.5" fill="#6fb4d6"/><rect x="6" y="16.5" width="9" height="1" fill="#b08d7c"/><use href="#cup" transform="translate(24.5 7.5) scale(0.078) translate(-353 -124.6)"/><path d="M44.5 10.5H59.5L57.5 31Q52 32.4 46.5 31Z" fill="#f7f4f0"/><rect x="44" y="9.8" width="16" height="1.6" rx=".8" fill="#e9e4de"/><circle cx="48" cy="15" r="1.8" fill="#d8453f"/><circle cx="53" cy="14" r="1.4" fill="#1d3557"/><circle cx="56.5" cy="17" r="1.6" fill="#d8453f"/><circle cx="49" cy="20.5" r="1.5" fill="#1d3557"/><circle cx="54" cy="21.5" r="2" fill="#d8453f"/><circle cx="50" cy="26" r="1.7" fill="#d8453f"/><circle cx="55" cy="27" r="1.3" fill="#1d3557"/><circle cx="47.5" cy="29" r="1" fill="#e8bf3f"/><circle cx="52" cy="17.5" r="1" fill="#e8bf3f"/></symbol>
  <symbol id="t_bg" viewBox="0 0 66 37.5" preserveAspectRatio="none"><rect width="66" height="37.5" fill="#ee6a5c"/><ellipse cx="4" cy="16.28" rx="1.68" ry="3.00" transform="rotate(0 4 20)" fill="#f7b9a6"/><ellipse cx="4" cy="16.28" rx="1.68" ry="3.00" transform="rotate(60 4 20)" fill="#f7b9a6"/><ellipse cx="4" cy="16.28" rx="1.68" ry="3.00" transform="rotate(120 4 20)" fill="#f7b9a6"/><ellipse cx="4" cy="16.28" rx="1.68" ry="3.00" transform="rotate(180 4 20)" fill="#f7b9a6"/><ellipse cx="4" cy="16.28" rx="1.68" ry="3.00" transform="rotate(240 4 20)" fill="#f7b9a6"/><ellipse cx="4" cy="16.28" rx="1.68" ry="3.00" transform="rotate(300 4 20)" fill="#f7b9a6"/><ellipse cx="61" cy="16.28" rx="1.68" ry="3.00" transform="rotate(0 61 20)" fill="#f7b9a6"/><ellipse cx="61" cy="16.28" rx="1.68" ry="3.00" transform="rotate(60 61 20)" fill="#f7b9a6"/><ellipse cx="61" cy="16.28" rx="1.68" ry="3.00" transform="rotate(120 61 20)" fill="#f7b9a6"/><ellipse cx="61" cy="16.28" rx="1.68" ry="3.00" transform="rotate(180 61 20)" fill="#f7b9a6"/><ellipse cx="61" cy="16.28" rx="1.68" ry="3.00" transform="rotate(240 61 20)" fill="#f7b9a6"/><ellipse cx="61" cy="16.28" rx="1.68" ry="3.00" transform="rotate(300 61 20)" fill="#f7b9a6"/><ellipse cx="18" cy="-1.10" rx="1.40" ry="2.50" transform="rotate(0 18 2)" fill="#f39a88"/><ellipse cx="18" cy="-1.10" rx="1.40" ry="2.50" transform="rotate(60 18 2)" fill="#f39a88"/><ellipse cx="18" cy="-1.10" rx="1.40" ry="2.50" transform="rotate(120 18 2)" fill="#f39a88"/><ellipse cx="18" cy="-1.10" rx="1.40" ry="2.50" transform="rotate(180 18 2)" fill="#f39a88"/><ellipse cx="18" cy="-1.10" rx="1.40" ry="2.50" transform="rotate(240 18 2)" fill="#f39a88"/><ellipse cx="18" cy="-1.10" rx="1.40" ry="2.50" transform="rotate(300 18 2)" fill="#f39a88"/><ellipse cx="33" cy="-2.10" rx="1.40" ry="2.50" transform="rotate(0 33 1)" fill="#f7b9a6"/><ellipse cx="33" cy="-2.10" rx="1.40" ry="2.50" transform="rotate(60 33 1)" fill="#f7b9a6"/><ellipse cx="33" cy="-2.10" rx="1.40" ry="2.50" transform="rotate(120 33 1)" fill="#f7b9a6"/><ellipse cx="33" cy="-2.10" rx="1.40" ry="2.50" transform="rotate(180 33 1)" fill="#f7b9a6"/><ellipse cx="33" cy="-2.10" rx="1.40" ry="2.50" transform="rotate(240 33 1)" fill="#f7b9a6"/><ellipse cx="33" cy="-2.10" rx="1.40" ry="2.50" transform="rotate(300 33 1)" fill="#f7b9a6"/><ellipse cx="50" cy="-1.10" rx="1.40" ry="2.50" transform="rotate(0 50 2)" fill="#f39a88"/><ellipse cx="50" cy="-1.10" rx="1.40" ry="2.50" transform="rotate(60 50 2)" fill="#f39a88"/><ellipse cx="50" cy="-1.10" rx="1.40" ry="2.50" transform="rotate(120 50 2)" fill="#f39a88"/><ellipse cx="50" cy="-1.10" rx="1.40" ry="2.50" transform="rotate(180 50 2)" fill="#f39a88"/><ellipse cx="50" cy="-1.10" rx="1.40" ry="2.50" transform="rotate(240 50 2)" fill="#f39a88"/><ellipse cx="50" cy="-1.10" rx="1.40" ry="2.50" transform="rotate(300 50 2)" fill="#f39a88"/><ellipse cx="14" cy="32.90" rx="1.40" ry="2.50" transform="rotate(0 14 36)" fill="#f39a88"/><ellipse cx="14" cy="32.90" rx="1.40" ry="2.50" transform="rotate(60 14 36)" fill="#f39a88"/><ellipse cx="14" cy="32.90" rx="1.40" ry="2.50" transform="rotate(120 14 36)" fill="#f39a88"/><ellipse cx="14" cy="32.90" rx="1.40" ry="2.50" transform="rotate(180 14 36)" fill="#f39a88"/><ellipse cx="14" cy="32.90" rx="1.40" ry="2.50" transform="rotate(240 14 36)" fill="#f39a88"/><ellipse cx="14" cy="32.90" rx="1.40" ry="2.50" transform="rotate(300 14 36)" fill="#f39a88"/><ellipse cx="40" cy="33.90" rx="1.40" ry="2.50" transform="rotate(0 40 37)" fill="#f7b9a6"/><ellipse cx="40" cy="33.90" rx="1.40" ry="2.50" transform="rotate(60 40 37)" fill="#f7b9a6"/><ellipse cx="40" cy="33.90" rx="1.40" ry="2.50" transform="rotate(120 40 37)" fill="#f7b9a6"/><ellipse cx="40" cy="33.90" rx="1.40" ry="2.50" transform="rotate(180 40 37)" fill="#f7b9a6"/><ellipse cx="40" cy="33.90" rx="1.40" ry="2.50" transform="rotate(240 40 37)" fill="#f7b9a6"/><ellipse cx="40" cy="33.90" rx="1.40" ry="2.50" transform="rotate(300 40 37)" fill="#f7b9a6"/><ellipse cx="56" cy="33.52" rx="1.12" ry="2.00" transform="rotate(0 56 36)" fill="#f39a88"/><ellipse cx="56" cy="33.52" rx="1.12" ry="2.00" transform="rotate(60 56 36)" fill="#f39a88"/><ellipse cx="56" cy="33.52" rx="1.12" ry="2.00" transform="rotate(120 56 36)" fill="#f39a88"/><ellipse cx="56" cy="33.52" rx="1.12" ry="2.00" transform="rotate(180 56 36)" fill="#f39a88"/><ellipse cx="56" cy="33.52" rx="1.12" ry="2.00" transform="rotate(240 56 36)" fill="#f39a88"/><ellipse cx="56" cy="33.52" rx="1.12" ry="2.00" transform="rotate(300 56 36)" fill="#f39a88"/><use href="#logo" transform="translate(20.80 8.60) scale(0.1)"/></symbol>
  <symbol id="t_navy" viewBox="0 0 66 37.5" preserveAspectRatio="none"><rect width="66" height="37.5" fill="#1c3356"/><ellipse cx="2.5" cy="5" rx="4.2" ry="6.2" transform="rotate(15 2.5 5)" fill="#e8574e"/><ellipse cx="60.5" cy="6" rx="5.5" ry="6.2" transform="rotate(-15 60.5 6)" fill="#e8574e"/><ellipse cx="23" cy="37" rx="6" ry="2.2" transform="rotate(0 23 37)" fill="#e8574e"/><ellipse cx="2" cy="33" rx="3" ry="4" transform="rotate(0 2 33)" fill="#e8574e"/><ellipse cx="6.5" cy="17" rx="1.8" ry="6.5" transform="rotate(12 6.5 17)" fill="#1f6f5a"/><ellipse cx="58" cy="31" rx="1.6" ry="5" transform="rotate(-30 58 31)" fill="#1f6f5a"/><ellipse cx="30" cy="5" rx="1.4" ry="4" transform="rotate(60 30 5)" fill="#1f6f5a"/><ellipse cx="12" cy="3.5" rx="3.6" ry="3" transform="rotate(0 12 3.5)" fill="#ecc552"/><ellipse cx="25.5" cy="25.5" rx="5.5" ry="3" transform="rotate(-22 25.5 25.5)" fill="#e5a720"/><ellipse cx="51" cy="36" rx="5.5" ry="2.4" transform="rotate(0 51 36)" fill="#e5a720"/><ellipse cx="41" cy="3" rx="4" ry="1.4" transform="rotate(20 41 3)" fill="#ecc552"/><path d="M33.5 11.9 L34.5 14.2 L36.9 14.4 L35.0 16.0 L35.6 18.4 L33.5 17.1 L31.4 18.4 L32.0 16.0 L30.1 14.4 L32.5 14.2Z" fill="#ecc552" stroke="#ecc552" stroke-width=".8" stroke-linejoin="round"/><path d="M39.5 8.5 L40.3 10.4 L42.4 10.6 L40.8 11.9 L41.3 13.9 L39.5 12.8 L37.7 13.9 L38.2 11.9 L36.6 10.6 L38.7 10.4Z" fill="#ecc552" stroke="#ecc552" stroke-width=".8" stroke-linejoin="round"/><path d="M6.0 25.3 L6.8 27.3 L9.0 27.5 L7.4 28.9 L7.9 31.1 L6.0 29.9 L4.1 31.1 L4.6 28.9 L3.0 27.5 L5.2 27.3Z" fill="#ecc552" stroke="#ecc552" stroke-width=".8" stroke-linejoin="round"/><path d="M54.0 21.5 L54.8 23.4 L56.9 23.6 L55.3 24.9 L55.8 26.9 L54.0 25.9 L52.2 26.9 L52.7 24.9 L51.1 23.6 L53.2 23.4Z" fill="#ecc552" stroke="#ecc552" stroke-width=".8" stroke-linejoin="round"/><path d="M62.5 28.0 L63.3 29.9 L65.4 30.1 L63.8 31.4 L64.3 33.4 L62.5 32.4 L60.7 33.4 L61.2 31.4 L59.6 30.1 L61.7 29.9Z" fill="#ecc552" stroke="#ecc552" stroke-width=".8" stroke-linejoin="round"/><path d="M45.0 27.9 L45.7 29.6 L47.5 29.7 L46.1 30.9 L46.5 32.6 L45.0 31.7 L43.5 32.6 L43.9 30.9 L42.5 29.7 L44.3 29.6Z" fill="#f3e6dc" stroke="#f3e6dc" stroke-width=".8" stroke-linejoin="round"/><ellipse cx="41" cy="23.5" rx="1.6" ry="2.6" transform="rotate(20 41 23.5)" fill="#f6cdb6"/><ellipse cx="45.5" cy="25.5" rx="1.6" ry="2.6" transform="rotate(-10 45.5 25.5)" fill="#f6cdb6"/><ellipse cx="44" cy="31" rx="1.5" ry="2.4" transform="rotate(10 44 31)" fill="#f3b896"/><ellipse cx="20" cy="14" rx="1.4" ry="2.4" transform="rotate(40 20 14)" fill="#f3b896"/><ellipse cx="25" cy="3.5" rx="3.2" ry="2" transform="rotate(10 25 3.5)" fill="#f3e6dc"/><ellipse cx="22" cy="9" rx="1.5" ry="3" transform="rotate(-50 22 9)" fill="#f3e6dc"/><circle cx="46.0" cy="8.0" r="0.55" fill="#f3e6dc"/><circle cx="47.0" cy="9.7" r="0.55" fill="#f3e6dc"/><circle cx="46.0" cy="11.4" r="0.55" fill="#f3e6dc"/><circle cx="47.0" cy="13.1" r="0.55" fill="#f3e6dc"/><circle cx="47.9" cy="8.0" r="0.55" fill="#f3e6dc"/><circle cx="48.9" cy="9.7" r="0.55" fill="#f3e6dc"/><circle cx="47.9" cy="11.4" r="0.55" fill="#f3e6dc"/><circle cx="48.9" cy="13.1" r="0.55" fill="#f3e6dc"/><circle cx="49.8" cy="8.0" r="0.55" fill="#f3e6dc"/><circle cx="50.8" cy="9.7" r="0.55" fill="#f3e6dc"/><circle cx="49.8" cy="11.4" r="0.55" fill="#f3e6dc"/><circle cx="50.8" cy="13.1" r="0.55" fill="#f3e6dc"/><circle cx="51.7" cy="8.0" r="0.55" fill="#f3e6dc"/><circle cx="52.7" cy="9.7" r="0.55" fill="#f3e6dc"/><circle cx="51.7" cy="11.4" r="0.55" fill="#f3e6dc"/><circle cx="52.7" cy="13.1" r="0.55" fill="#f3e6dc"/><circle cx="53.6" cy="8.0" r="0.55" fill="#f3e6dc"/><circle cx="54.6" cy="9.7" r="0.55" fill="#f3e6dc"/><circle cx="53.6" cy="11.4" r="0.55" fill="#f3e6dc"/><circle cx="54.6" cy="13.1" r="0.55" fill="#f3e6dc"/><circle cx="8.0" cy="19.5" r="0.55" fill="#f3e6dc"/><circle cx="8.9" cy="21.2" r="0.55" fill="#f3e6dc"/><circle cx="8.0" cy="22.9" r="0.55" fill="#f3e6dc"/><circle cx="9.9" cy="19.5" r="0.55" fill="#f3e6dc"/><circle cx="10.8" cy="21.2" r="0.55" fill="#f3e6dc"/><circle cx="9.9" cy="22.9" r="0.55" fill="#f3e6dc"/><circle cx="11.8" cy="19.5" r="0.55" fill="#f3e6dc"/><circle cx="12.8" cy="21.2" r="0.55" fill="#f3e6dc"/><circle cx="11.8" cy="22.9" r="0.55" fill="#f3e6dc"/><circle cx="13.7" cy="19.5" r="0.55" fill="#f3e6dc"/><circle cx="14.6" cy="21.2" r="0.55" fill="#f3e6dc"/><circle cx="13.7" cy="22.9" r="0.55" fill="#f3e6dc"/><circle cx="36" cy="28" r="3.8" fill="none" stroke="#3f7aa6" stroke-width=".7"/><circle cx="16" cy="31" r="3.4" fill="none" stroke="#3f7aa6" stroke-width=".7"/><circle cx="55" cy="16" r="3" fill="none" stroke="#3f7aa6" stroke-width=".7"/><ellipse cx="31" cy="33" rx="3.4" ry="1.4" transform="rotate(-20 31 33)" fill="#7ec4cf"/><ellipse cx="13" cy="11" rx="3" ry="1.2" transform="rotate(30 13 11)" fill="#7ec4cf"/></symbol>
  <symbol id="t_social" viewBox="0 0 66 37.5" preserveAspectRatio="none"><rect width="66" height="37.5" fill="#b9c2cc"/><rect width="66" height="10" fill="#8e98a6"/><rect x="0" y="0" width="14" height="37.5" fill="#6b737f"/><ellipse cx="54.0" cy="13.6" rx="8.8" ry="9.1" fill="#1a1211"/><ellipse cx="54" cy="16" rx="6.0" ry="7.0" fill="#8a563f"/><path d="M51.5 18.8Q54 21.2 56.5 18.8" fill="#fff" stroke="#7a3b36" stroke-width=".3"/><circle cx="51.7" cy="15.2" r="0.70" fill="#2a1a18"/><circle cx="56.3" cy="15.2" r="0.70" fill="#2a1a18"/><ellipse cx="39.0" cy="9.7" rx="8.1" ry="8.5" fill="#120c0b"/><ellipse cx="39" cy="12" rx="5.5" ry="6.5" fill="#6a4030"/><path d="M36.7 14.6Q39 16.9 41.3 14.6" fill="#fff" stroke="#7a3b36" stroke-width=".3"/><circle cx="36.9" cy="11.2" r="0.65" fill="#2a1a18"/><circle cx="41.1" cy="11.2" r="0.65" fill="#2a1a18"/><path d="M0 37.5V22Q6 14 16 18L24 37.5Z" fill="#e9edf2"/><rect x="44" y="26" width="22" height="12" fill="#a3262f"/><rect x="60" y="24" width="6" height="14" fill="#3a8f9a"/><ellipse cx="20.0" cy="11.2" rx="10.0" ry="10.4" fill="#241715"/><ellipse cx="20" cy="14" rx="6.8" ry="8.0" fill="#c58d6c"/><path d="M17.2 17.2Q20 20.0 22.8 17.2" fill="#fff" stroke="#7a3b36" stroke-width=".3"/><circle cx="17.4" cy="13.0" r="0.80" fill="#2a1a18"/><circle cx="22.6" cy="13.0" r="0.80" fill="#2a1a18"/><ellipse cx="31.0" cy="25.8" rx="9.4" ry="9.8" fill="#1c1211"/><ellipse cx="31" cy="28" rx="6.4" ry="7.5" fill="#d6a07e"/><path d="M28.4 31.0Q31 33.6 33.6 31.0" fill="#fff" stroke="#7a3b36" stroke-width=".3"/><circle cx="28.5" cy="27.1" r="0.75" fill="#2a1a18"/><circle cx="33.5" cy="27.1" r="0.75" fill="#2a1a18"/><ellipse cx="45.0" cy="18.7" rx="8.1" ry="8.5" fill="#1a100f"/><ellipse cx="45" cy="21" rx="5.5" ry="6.5" fill="#b77c5f"/><path d="M42.7 23.6Q45 25.9 47.3 23.6" fill="#fff" stroke="#7a3b36" stroke-width=".3"/><circle cx="42.9" cy="20.2" r="0.65" fill="#2a1a18"/><circle cx="47.1" cy="20.2" r="0.65" fill="#2a1a18"/></symbol>
  <symbol id="t_pack01" viewBox="0 0 66 37.5" preserveAspectRatio="none"><rect width="66" height="37.5" fill="#fcfbf9"/><ellipse cx="37.6" cy="23.7" rx="2.9" ry="2.0" transform="rotate(117 37.6 23.7)" fill="#f3c9b0"/><ellipse cx="60.0" cy="7.0" rx="2.6" ry="2.2" transform="rotate(91 60.0 7.0)" fill="#cfdde9"/><ellipse cx="34.9" cy="16.7" rx="3.1" ry="2.6" transform="rotate(54 34.9 16.7)" fill="#d9e3ec"/><ellipse cx="34.2" cy="33.7" rx="2.7" ry="2.6" transform="rotate(122 34.2 33.7)" fill="#d9e3ec"/><ellipse cx="61.2" cy="20.8" rx="2.6" ry="1.7" transform="rotate(10 61.2 20.8)" fill="#d9e3ec"/><ellipse cx="65.7" cy="37.1" rx="1.5" ry="1.1" transform="rotate(118 65.7 37.1)" fill="#f9c9c0"/><ellipse cx="33.8" cy="12.0" rx="2.0" ry="1.8" transform="rotate(100 33.8 12.0)" fill="#e6e9ee"/><ellipse cx="12.2" cy="4.1" rx="1.5" ry="1.4" transform="rotate(135 12.2 4.1)" fill="#f3c9b0"/><ellipse cx="56.2" cy="2.4" rx="1.6" ry="1.4" transform="rotate(1 56.2 2.4)" fill="#e6e9ee"/><ellipse cx="18.2" cy="7.6" rx="1.7" ry="1.5" transform="rotate(82 18.2 7.6)" fill="#e6e9ee"/><ellipse cx="52.1" cy="22.1" rx="2.2" ry="2.1" transform="rotate(87 52.1 22.1)" fill="#f6d3c4"/><ellipse cx="31.8" cy="14.2" rx="2.8" ry="1.8" transform="rotate(157 31.8 14.2)" fill="#f6d3c4"/><ellipse cx="61.8" cy="23.8" rx="2.7" ry="2.6" transform="rotate(152 61.8 23.8)" fill="#f9c9c0"/><ellipse cx="60.1" cy="27.4" rx="2.3" ry="2.0" transform="rotate(159 60.1 27.4)" fill="#cfdde9"/><ellipse cx="18.6" cy="10.5" rx="3.1" ry="2.4" transform="rotate(85 18.6 10.5)" fill="#f3c9b0"/><ellipse cx="63.5" cy="18.1" rx="1.4" ry="1.1" transform="rotate(145 63.5 18.1)" fill="#d9e3ec"/><ellipse cx="11.1" cy="35.9" rx="3.0" ry="2.2" transform="rotate(171 11.1 35.9)" fill="#f3c9b0"/><ellipse cx="11.4" cy="27.2" rx="2.0" ry="1.6" transform="rotate(168 11.4 27.2)" fill="#d9e3ec"/><ellipse cx="61.1" cy="32.6" rx="2.8" ry="2.3" transform="rotate(92 61.1 32.6)" fill="#cfdde9"/><ellipse cx="41.3" cy="27.0" rx="1.8" ry="1.2" transform="rotate(49 41.3 27.0)" fill="#f3c9b0"/><ellipse cx="5.2" cy="4.4" rx="3.0" ry="2.0" transform="rotate(110 5.2 4.4)" fill="#f6d3c4"/><ellipse cx="61.1" cy="29.0" rx="2.4" ry="2.4" transform="rotate(122 61.1 29.0)" fill="#f6d3c4"/><ellipse cx="56.7" cy="5.8" rx="1.4" ry="0.9" transform="rotate(154 56.7 5.8)" fill="#e6e9ee"/><ellipse cx="2.6" cy="0.8" rx="2.8" ry="2.6" transform="rotate(41 2.6 0.8)" fill="#f6d3c4"/><ellipse cx="22.1" cy="3.3" rx="3.0" ry="2.4" transform="rotate(56 22.1 3.3)" fill="#f6d3c4"/><ellipse cx="49.8" cy="31.3" rx="1.4" ry="0.9" transform="rotate(155 49.8 31.3)" fill="#f3c9b0"/><ellipse cx="21.7" cy="19.7" rx="2.7" ry="1.7" transform="rotate(70 21.7 19.7)" fill="#e6e9ee"/><ellipse cx="17.9" cy="32.5" rx="2.4" ry="2.2" transform="rotate(47 17.9 32.5)" fill="#f9c9c0"/><ellipse cx="27.4" cy="4.9" rx="2.8" ry="2.3" transform="rotate(83 27.4 4.9)" fill="#cfdde9"/><ellipse cx="48.7" cy="0.3" rx="1.4" ry="1.0" transform="rotate(34 48.7 0.3)" fill="#cfdde9"/><ellipse cx="16.7" cy="11.5" rx="2.9" ry="1.8" transform="rotate(81 16.7 11.5)" fill="#e6e9ee"/><ellipse cx="37.8" cy="35.9" rx="1.9" ry="1.7" transform="rotate(51 37.8 35.9)" fill="#e6e9ee"/><ellipse cx="64.6" cy="13.0" rx="1.6" ry="1.6" transform="rotate(116 64.6 13.0)" fill="#e6e9ee"/><ellipse cx="21.9" cy="30.4" rx="1.5" ry="1.0" transform="rotate(143 21.9 30.4)" fill="#f3c9b0"/><ellipse cx="10.6" cy="34.3" rx="0.9" ry="0.5" transform="rotate(111 10.6 34.3)" fill="#1d3557"/><ellipse cx="49.6" cy="31.7" rx="0.9" ry="0.5" transform="rotate(90 49.6 31.7)" fill="#1d3557"/><ellipse cx="51.4" cy="32.7" rx="0.9" ry="0.5" transform="rotate(147 51.4 32.7)" fill="#1d3557"/><ellipse cx="56.6" cy="26.6" rx="0.9" ry="0.5" transform="rotate(51 56.6 26.6)" fill="#1d3557"/><ellipse cx="25.4" cy="11.7" rx="0.9" ry="0.5" transform="rotate(78 25.4 11.7)" fill="#1d3557"/><ellipse cx="38.8" cy="26.5" rx="0.9" ry="0.5" transform="rotate(68 38.8 26.5)" fill="#1d3557"/><ellipse cx="30.0" cy="23.9" rx="0.9" ry="0.5" transform="rotate(174 30.0 23.9)" fill="#1d3557"/><ellipse cx="24.3" cy="16.5" rx="0.9" ry="0.5" transform="rotate(50 24.3 16.5)" fill="#1d3557"/><ellipse cx="54.5" cy="3.9" rx="0.9" ry="0.5" transform="rotate(34 54.5 3.9)" fill="#1d3557"/><ellipse cx="21.7" cy="34.2" rx="0.9" ry="0.5" transform="rotate(150 21.7 34.2)" fill="#1d3557"/><ellipse cx="8.7" cy="8.9" rx="0.9" ry="0.5" transform="rotate(143 8.7 8.9)" fill="#1d3557"/><ellipse cx="62.5" cy="15.5" rx="0.9" ry="0.5" transform="rotate(26 62.5 15.5)" fill="#1d3557"/><ellipse cx="60.5" cy="18.8" rx="0.9" ry="0.5" transform="rotate(143 60.5 18.8)" fill="#1d3557"/><ellipse cx="26.3" cy="3.5" rx="0.9" ry="0.5" transform="rotate(102 26.3 3.5)" fill="#1d3557"/><ellipse cx="29.2" cy="0.1" rx="0.9" ry="0.5" transform="rotate(17 29.2 0.1)" fill="#1d3557"/><ellipse cx="63.8" cy="16.6" rx="0.9" ry="0.5" transform="rotate(38 63.8 16.6)" fill="#1d3557"/><ellipse cx="18.5" cy="2.5" rx="3.6" ry="2.4" transform="rotate(0 18.5 2.5)" fill="#1d3557"/><ellipse cx="34.5" cy="2" rx="1.6" ry="2.6" transform="rotate(20 34.5 2)" fill="#1d3557"/><ellipse cx="27.5" cy="19.5" rx="3.6" ry="2.8" transform="rotate(-10 27.5 19.5)" fill="#1d3557"/><ellipse cx="2" cy="20" rx="2.4" ry="2.6" transform="rotate(0 2 20)" fill="#e9b92f"/><ellipse cx="29.5" cy="29.5" rx="3.2" ry="3" transform="rotate(0 29.5 29.5)" fill="#e9b92f"/><ellipse cx="6.5" cy="13.5" rx="2.2" ry="2.6" transform="rotate(0 6.5 13.5)" fill="#e98b82"/><ellipse cx="12" cy="24" rx="2.6" ry="2" transform="rotate(0 12 24)" fill="#e98b82"/><ellipse cx="26.5" cy="6.5" rx="2.6" ry="2.2" transform="rotate(0 26.5 6.5)" fill="#f0a79c"/><ellipse cx="21" cy="32" rx="3.2" ry="2.2" transform="rotate(0 21 32)" fill="#f3c5a8"/><rect x="36" y="1.5" width="28" height="34.5" fill="#fcfbf9" opacity=".55"/><rect x="44" y="3.4" width="11" height=".9" fill="#aeb1bb"/><path d="M40.5 8H63.5V34.5H40.5Z" fill="#f6dcc9"/><path d="M43.5 9.5H58.5V33H43.5Z" fill="#f4eee9"/><rect x="43.5" y="12.5" width="15" height="8.5" fill="#dc4b45"/><circle cx="45.5" cy="24" r="1" fill="#1d3557"/><circle cx="50" cy="26" r="1" fill="#d8453f"/><circle cx="55" cy="24" r="1" fill="#e8bf3f"/><circle cx="47" cy="30" r="1" fill="#e8bf3f"/><circle cx="53" cy="30.5" r="1" fill="#1d3557"/><circle cx="56.5" cy="28" r="1" fill="#f3b896"/><circle cx="45" cy="11" r="1" fill="#1d3557"/><circle cx="51" cy="10.6" r="1" fill="#e8bf3f"/><circle cx="56" cy="11" r="1" fill="#1d3557"/><circle cx="48" cy="16.5" r="1" fill="#f6dcc9"/><circle cx="53.5" cy="16.5" r="1" fill="#fff"/></symbol>
  <symbol id="t_citrus" viewBox="0 0 66 37.5" preserveAspectRatio="none"><rect width="66" height="37.5" fill="#fcfbf9"/><ellipse cx="10.9" cy="25.9" rx="2.5" ry="2.0" transform="rotate(39 10.9 25.9)" fill="#e6e9ee"/><ellipse cx="53.3" cy="19.2" rx="2.3" ry="1.6" transform="rotate(1 53.3 19.2)" fill="#d9e3ec"/><ellipse cx="61.6" cy="16.1" rx="1.7" ry="1.5" transform="rotate(166 61.6 16.1)" fill="#cfdde9"/><ellipse cx="2.8" cy="37.4" rx="2.7" ry="2.6" transform="rotate(111 2.8 37.4)" fill="#f6d3c4"/><ellipse cx="63.1" cy="20.3" rx="2.6" ry="2.3" transform="rotate(169 63.1 20.3)" fill="#f6d3c4"/><ellipse cx="10.2" cy="30.7" rx="1.6" ry="1.6" transform="rotate(82 10.2 30.7)" fill="#f3c9b0"/><ellipse cx="48.1" cy="15.1" rx="1.7" ry="1.4" transform="rotate(85 48.1 15.1)" fill="#f9c9c0"/><ellipse cx="4.9" cy="7.4" rx="2.6" ry="2.4" transform="rotate(118 4.9 7.4)" fill="#f3c9b0"/><ellipse cx="65.3" cy="2.7" rx="2.4" ry="2.0" transform="rotate(70 65.3 2.7)" fill="#d9e3ec"/><ellipse cx="60.9" cy="33.3" rx="2.1" ry="1.6" transform="rotate(81 60.9 33.3)" fill="#e6e9ee"/><ellipse cx="21.0" cy="18.2" rx="1.9" ry="1.8" transform="rotate(29 21.0 18.2)" fill="#cfdde9"/><ellipse cx="65.5" cy="18.6" rx="2.3" ry="1.9" transform="rotate(135 65.5 18.6)" fill="#f9c9c0"/><ellipse cx="37.7" cy="11.9" rx="3.2" ry="2.0" transform="rotate(121 37.7 11.9)" fill="#cfdde9"/><ellipse cx="23.0" cy="34.8" rx="2.0" ry="1.7" transform="rotate(55 23.0 34.8)" fill="#f6d3c4"/><ellipse cx="11.1" cy="34.6" rx="1.7" ry="1.3" transform="rotate(29 11.1 34.6)" fill="#f6d3c4"/><ellipse cx="44.6" cy="33.7" rx="3.1" ry="2.4" transform="rotate(178 44.6 33.7)" fill="#cfdde9"/><ellipse cx="39.0" cy="33.1" rx="2.3" ry="1.7" transform="rotate(44 39.0 33.1)" fill="#f9c9c0"/><ellipse cx="10.7" cy="2.6" rx="2.8" ry="2.6" transform="rotate(87 10.7 2.6)" fill="#d9e3ec"/><ellipse cx="3.4" cy="9.7" rx="1.9" ry="1.5" transform="rotate(31 3.4 9.7)" fill="#f6d3c4"/><ellipse cx="57.4" cy="24.2" rx="1.7" ry="1.1" transform="rotate(131 57.4 24.2)" fill="#f6d3c4"/><ellipse cx="16.6" cy="36.0" rx="2.3" ry="2.1" transform="rotate(5 16.6 36.0)" fill="#f9c9c0"/><ellipse cx="59.4" cy="13.7" rx="1.7" ry="1.3" transform="rotate(139 59.4 13.7)" fill="#e6e9ee"/><ellipse cx="38.4" cy="31.9" rx="2.0" ry="1.6" transform="rotate(50 38.4 31.9)" fill="#cfdde9"/><ellipse cx="0.7" cy="25.7" rx="3.1" ry="1.9" transform="rotate(107 0.7 25.7)" fill="#cfdde9"/><ellipse cx="16.5" cy="35.8" rx="2.2" ry="1.9" transform="rotate(135 16.5 35.8)" fill="#f9c9c0"/><ellipse cx="8.8" cy="3.6" rx="1.6" ry="1.0" transform="rotate(80 8.8 3.6)" fill="#f9c9c0"/><ellipse cx="4.7" cy="4.5" rx="1.9" ry="1.4" transform="rotate(170 4.7 4.5)" fill="#e6e9ee"/><ellipse cx="32.6" cy="8.2" rx="1.7" ry="1.1" transform="rotate(68 32.6 8.2)" fill="#cfdde9"/><ellipse cx="49.1" cy="28.4" rx="2.5" ry="2.0" transform="rotate(134 49.1 28.4)" fill="#f6d3c4"/><ellipse cx="52.2" cy="0.3" rx="2.2" ry="1.4" transform="rotate(138 52.2 0.3)" fill="#f9c9c0"/><ellipse cx="56.4" cy="8.7" rx="3.1" ry="2.6" transform="rotate(134 56.4 8.7)" fill="#f9c9c0"/><ellipse cx="25.7" cy="11.6" rx="3.0" ry="2.2" transform="rotate(91 25.7 11.6)" fill="#f3c9b0"/><ellipse cx="32.3" cy="21.5" rx="2.4" ry="1.5" transform="rotate(107 32.3 21.5)" fill="#d9e3ec"/><ellipse cx="63.8" cy="11.6" rx="2.7" ry="2.2" transform="rotate(101 63.8 11.6)" fill="#f6d3c4"/><ellipse cx="40.7" cy="12.2" rx="0.9" ry="0.5" transform="rotate(36 40.7 12.2)" fill="#1d3557"/><ellipse cx="4.3" cy="24.7" rx="0.9" ry="0.5" transform="rotate(76 4.3 24.7)" fill="#1d3557"/><ellipse cx="57.3" cy="24.4" rx="0.9" ry="0.5" transform="rotate(113 57.3 24.4)" fill="#1d3557"/><ellipse cx="53.3" cy="36.7" rx="0.9" ry="0.5" transform="rotate(91 53.3 36.7)" fill="#1d3557"/><ellipse cx="62.5" cy="25.5" rx="0.9" ry="0.5" transform="rotate(127 62.5 25.5)" fill="#1d3557"/><ellipse cx="31.1" cy="19.2" rx="0.9" ry="0.5" transform="rotate(158 31.1 19.2)" fill="#1d3557"/><ellipse cx="4.6" cy="0.9" rx="0.9" ry="0.5" transform="rotate(119 4.6 0.9)" fill="#1d3557"/><ellipse cx="2.8" cy="10.3" rx="0.9" ry="0.5" transform="rotate(106 2.8 10.3)" fill="#1d3557"/><ellipse cx="26.7" cy="16.0" rx="0.9" ry="0.5" transform="rotate(144 26.7 16.0)" fill="#1d3557"/><ellipse cx="26.3" cy="12.3" rx="0.9" ry="0.5" transform="rotate(41 26.3 12.3)" fill="#1d3557"/><ellipse cx="60.4" cy="24.5" rx="0.9" ry="0.5" transform="rotate(7 60.4 24.5)" fill="#1d3557"/><ellipse cx="11.4" cy="14.0" rx="0.9" ry="0.5" transform="rotate(109 11.4 14.0)" fill="#1d3557"/><ellipse cx="14.2" cy="16.9" rx="0.9" ry="0.5" transform="rotate(114 14.2 16.9)" fill="#1d3557"/><ellipse cx="40.9" cy="27.4" rx="0.9" ry="0.5" transform="rotate(109 40.9 27.4)" fill="#1d3557"/><ellipse cx="54.1" cy="9.8" rx="0.9" ry="0.5" transform="rotate(87 54.1 9.8)" fill="#1d3557"/><ellipse cx="32.9" cy="11.5" rx="0.9" ry="0.5" transform="rotate(69 32.9 11.5)" fill="#1d3557"/><ellipse cx="17" cy="3" rx="5" ry="2.8" transform="rotate(8 17 3)" fill="#1d3557"/><ellipse cx="43.5" cy="2.5" rx="4.2" ry="2.4" transform="rotate(-8 43.5 2.5)" fill="#2a4468"/><ellipse cx="5.5" cy="26" rx="4.6" ry="3.2" transform="rotate(25 5.5 26)" fill="#1d3557"/><ellipse cx="57.5" cy="26" rx="4.8" ry="3.4" transform="rotate(-20 57.5 26)" fill="#1d3557"/><ellipse cx="18.5" cy="27.5" rx="3.8" ry="3.4" transform="rotate(0 18.5 27.5)" fill="#e9b92f"/><ellipse cx="27" cy="19" rx="3" ry="3.2" transform="rotate(0 27 19)" fill="#e35d54"/><ellipse cx="57.5" cy="8" rx="3" ry="3.1" transform="rotate(0 57.5 8)" fill="#e35d54"/><ellipse cx="3.5" cy="7.5" rx="2.6" ry="3" transform="rotate(0 3.5 7.5)" fill="#e35d54"/><ellipse cx="34" cy="34.5" rx="3" ry="2" transform="rotate(0 34 34.5)" fill="#e35d54"/><ellipse cx="30" cy="5.5" rx="4.4" ry="2.6" transform="rotate(0 30 5.5)" fill="#f3c5a8"/><ellipse cx="44" cy="27" rx="3.6" ry="2.8" transform="rotate(20 44 27)" fill="#cfd6dd"/><ellipse cx="47" cy="16" rx="2.2" ry="3.4" transform="rotate(10 47 16)" fill="#dfe4ea"/></symbol>
</defs></svg>
<div id="media" class="abs">
  <div class="tab" style="left:16.5px;color:#fff;font-weight:bold;font-size:8px">All</div><div class="abs" style="left:17px;top:26px;width:9.5px;height:1.3px;background:#fff;border-radius:1px"></div>
  <div class="tab" style="left:43.5px">Videos</div><div class="tab" style="left:86.5px">Images</div><div class="tab" style="left:129px">Audio</div>
  <div class="abs" style="left:15px;top:32.8px;width:121px;height:23.2px;background:#5a49ea;border-radius:3px 0 0 3px;text-align:center;font-size:7.8px;line-height:25.6px;font-weight:bold;color:#fff">Import media</div>
  <div class="abs" style="left:135.4px;top:32.8px;width:18.8px;height:23.2px;background:#5a49ea;border-left:1px solid #3e31c4;border-radius:0 3px 3px 0"></div>
  <svg class="abs" style="left:141.2px;top:42px" width="8" height="6" viewBox="0 0 8 6" fill="none" stroke="#fff" stroke-width="1.1" stroke-linecap="round" stroke-linejoin="round"><path d="M1.6 1.6L4 4L6.4 1.6"/></svg>
  <div class="thumb" style="left:18px;top:66.5px"><svg width="66" height="38" style="display:block"><use href="#t_logo" width="66" height="38"/></svg><div class="chk"><svg width="15" height="9" viewBox="0 0 15 9" style="display:block" fill="none" stroke="#17614f" stroke-width="1.2" stroke-linecap="round" stroke-linejoin="round"><path d="M5 4.6L6.9 6.4L10.2 2.8"/></svg></div></div>
  <div class="tl" style="left:18px;top:106.0px">Title</div>
  <div class="thumb" style="left:89px;top:66.5px"><svg width="66" height="38" style="display:block"><use href="#t_pal" width="66" height="38"/></svg><div class="chk"><svg width="15" height="9" viewBox="0 0 15 9" style="display:block" fill="none" stroke="#17614f" stroke-width="1.2" stroke-linecap="round" stroke-linejoin="round"><path d="M5 4.6L6.9 6.4L10.2 2.8"/></svg></div></div>
  <div class="tl" style="left:89px;top:106.0px">Color Palette</div>
  <div class="thumb" style="left:18px;top:118.8px"><svg width="66" height="38" style="display:block"><use href="#t_audio" width="66" height="38"/></svg><div class="dur">2:17</div><div class="chk"><svg width="15" height="9" viewBox="0 0 15 9" style="display:block" fill="none" stroke="#17614f" stroke-width="1.2" stroke-linecap="round" stroke-linejoin="round"><path d="M5 4.6L6.9 6.4L10.2 2.8"/></svg></div></div>
  <div class="tl" style="left:18px;top:158.3px;font-size:5.8px">Upbeat Funky Good Tim...</div>
  <div class="thumb" style="left:89px;top:118.8px"><svg width="66" height="38" style="display:block"><use href="#t_cupm" width="66" height="38"/></svg><div class="dur">0:02</div><div class="chk"><svg width="15" height="9" viewBox="0 0 15 9" style="display:block" fill="none" stroke="#17614f" stroke-width="1.2" stroke-linecap="round" stroke-linejoin="round"><path d="M5 4.6L6.9 6.4L10.2 2.8"/></svg></div></div>
  <div class="tl" style="left:89px;top:158.3px">Cup Mockup</div>
  <div class="thumb" style="left:18px;top:171.0px"><svg width="66" height="38" style="display:block"><use href="#t_spicy" width="66" height="38"/></svg><div class="dur">0:02</div><div class="chk"><svg width="15" height="9" viewBox="0 0 15 9" style="display:block" fill="none" stroke="#17614f" stroke-width="1.2" stroke-linecap="round" stroke-linejoin="round"><path d="M5 4.6L6.9 6.4L10.2 2.8"/></svg></div></div>
  <div class="tl" style="left:18px;top:210.5px">Spicy Punch</div>
  <div class="thumb" style="left:89px;top:171.0px"><svg width="66" height="38" style="display:block"><use href="#t_good" width="66" height="38"/></svg><div class="dur">0:02</div><div class="chk"><svg width="15" height="9" viewBox="0 0 15 9" style="display:block" fill="none" stroke="#17614f" stroke-width="1.2" stroke-linecap="round" stroke-linejoin="round"><path d="M5 4.6L6.9 6.4L10.2 2.8"/></svg></div></div>
  <div class="tl" style="left:89px;top:210.5px">Good Times</div>
  <div class="thumb" style="left:18px;top:223.2px"><svg width="66" height="38" style="display:block"><use href="#t_persona" width="66" height="38"/></svg><div class="dur">0:02</div><div class="chk"><svg width="15" height="9" viewBox="0 0 15 9" style="display:block" fill="none" stroke="#17614f" stroke-width="1.2" stroke-linecap="round" stroke-linejoin="round"><path d="M5 4.6L6.9 6.4L10.2 2.8"/></svg></div></div>
  <div class="tl" style="left:18px;top:262.7px">Persona</div>
  <div class="thumb" style="left:89px;top:223.2px"><svg width="66" height="38" style="display:block"><use href="#t_store" width="66" height="38"/></svg><div class="dur">0:02</div></div>
  <div class="tl" style="left:89px;top:262.7px">Store Banner</div>
  <div class="thumb" style="left:18px;top:275.3px"><svg width="66" height="38" style="display:block"><use href="#t_pack" width="66" height="38"/></svg><div class="dur">0:02</div></div>
  <div class="tl" style="left:18px;top:314.8px">Packaging</div>
  <div class="thumb" style="left:89px;top:275.3px"><svg width="66" height="38" style="display:block"><use href="#t_bg" width="66" height="38"/></svg><div class="dur">0:02</div></div>
  <div class="tl" style="left:89px;top:314.8px">Background</div>
  <div class="thumb" style="left:18px;top:328.6px"><svg width="66" height="38" style="display:block"><use href="#t_navy" width="66" height="38"/></svg><div class="dur">0:02</div></div>
  <div class="tl" style="left:18px;top:368.1px">Pattern - Spicy Punch</div>
  <div class="thumb" style="left:89px;top:328.6px"><svg width="66" height="38" style="display:block"><use href="#t_social" width="66" height="38"/></svg><div class="dur">0:02</div></div>
  <div class="tl" style="left:89px;top:368.1px">Social Post</div>
  <div class="thumb" style="left:18px;top:382.7px"><svg width="66" height="38" style="display:block"><use href="#t_pack01" width="66" height="38"/></svg></div>
  <div class="tl" style="left:18px;top:422.2px">Packaging-01</div>
  <div class="thumb" style="left:89px;top:382.7px"><svg width="66" height="38" style="display:block"><use href="#t_citrus" width="66" height="38"/></svg></div>
  <div class="tl" style="left:89px;top:422.2px">Pattern - Citrus Blast</div>
  <div class="abs" style="left:0;top:595.5px;width:167px;height:1px;background:#2b2c38"></div>
  <svg class="abs" style="left:11px;top:604px" width="12" height="11" viewBox="0 0 14 13" fill="none" stroke="#e4e5ea" stroke-width="1.1" stroke-linecap="round" stroke-linejoin="round"><path d="M7 9.4H3.8Q1.4 9.2 1.6 7Q1.8 5.2 3.8 5.2Q4.2 2.2 7 2.2Q9.6 2.2 10.2 5Q11.8 5.2 12 6.4"/><circle cx="10" cy="9.4" r="2.6" fill="#e4e5ea" stroke="none"/><path d="M8.9 9.4L9.7 10.2L11.1 8.6" stroke="#22232e" stroke-width=".8"/></svg>
  <div class="abs" style="left:26px;top:605px;font-size:6.3px;line-height:9px;color:#e8e9ee;font-weight:bold;white-space:nowrap">Your media is backed up</div>
  <svg class="abs" style="left:145.5px;top:607px" width="8" height="6" viewBox="0 0 8 6" fill="none" stroke="#e8e9ee" stroke-width="1.1" stroke-linecap="round" stroke-linejoin="round"><path d="M1.4 1.6L4 4.2L6.6 1.6"/></svg>
</div>

<!-- HEADER -->
<div id="header" class="abs">
  <div class="abs" style="left:11px;top:10px;font-size:8.2px;line-height:10px;color:#7e8090">Personal</div>
  <svg class="abs" style="left:52px;top:10px" width="6" height="8" viewBox="0 0 6 8" fill="none" stroke="#8b8d9b" stroke-width="1"><path d="M1.6 1.4L4.4 4L1.6 6.6"/></svg>
  <div class="abs" style="left:61px;top:4.5px;width:43px;height:22px;background:#20212c;border-radius:3px"></div>
  <div class="abs" style="left:68.5px;top:10px;font-size:8.4px;line-height:10px;color:#f0f0f4">FruiTea</div>
  <div class="abs" style="left:111.5px;top:11.5px;width:1.2px;height:1.2px;background:#6d6f7d;box-shadow:0 2.2px 0 #6d6f7d,0 4.4px 0 #6d6f7d"></div>
  <svg class="abs" style="left:125px;top:8px" width="14" height="13" viewBox="0 0 14 13" fill="none" stroke="#d8d9e0" stroke-width="1.05" stroke-linecap="round" stroke-linejoin="round"><path d="M7 9.4H3.8Q1.4 9.2 1.6 7Q1.8 5.2 3.8 5.2Q4.2 2.2 7 2.2Q9.6 2.2 10.2 5Q11.8 5.2 12 6.4"/><circle cx="10" cy="9.4" r="2.5" fill="#d8d9e0" stroke="none"/><path d="M8.9 9.4L9.7 10.2L11.1 8.6" stroke="#1a1b25" stroke-width=".8"/></svg>
  <div class="abs" style="left:751.5px;top:8px;width:62.5px;height:22.5px;background:#5a49ea;border-radius:3px"></div>
  <div class="abs" style="left:764px;top:15px;font-size:8.4px;line-height:10px;color:#fff;font-weight:bold">Export</div>
  <svg class="abs" style="left:794px;top:17px" width="8" height="6" viewBox="0 0 8 6" fill="none" stroke="#fff" stroke-width="1.1" stroke-linecap="round" stroke-linejoin="round"><path d="M1.4 1.6L4 4.2L6.6 1.6"/></svg>
  <div class="abs" style="left:787.5px;top:41.5px;width:26px;height:16.5px;border:1.2px solid #757785;border-radius:3px;font-family:'Liberation Mono',monospace;font-size:6.8px;line-height:15.6px;text-align:center;color:#d4d5dc;font-weight:bold;letter-spacing:.3px">16:9</div>
</div>

<!-- PREVIEW -->
<div id="preview" class="abs">
  <div class="abs y"></div>
  <svg class="abs" style="left:0;top:0" width="647" height="365" viewBox="312 64.5 647 365">
    <use href="#logo" transform="translate(680 140)"/>
    <g id="cup">
    <clipPath id="cupclip"><path d="M353 129Q353 124.8 358 124.8H568.5Q573.5 124.8 573.5 129Q573.5 132.6 568 133.8L564.8 134.5L541.5 378Q541 384 533 385.5Q463 392.5 393 385.5Q385.5 384 385 378L361 134.5L358.5 133.8Q353 132.6 353 129Z"/></clipPath>
    <g clip-path="url(#cupclip)">
      <rect x="350" y="120" width="230" height="275" fill="#1e385c"/>
      <use href="#of" transform="translate(404 131) rotate(10) scale(1.15)" stroke="#468aad"/>
      <use href="#gg" transform="translate(446 130) rotate(-8)" />
      <use href="#od" transform="translate(491 130)" stroke="#8fc7dc"/>
      <use href="#pf" transform="translate(519 134) rotate(-105)" />
      <use href="#pf" transform="translate(538 132) rotate(170) scale(0.95)" />
      <use href="#dot" transform="translate(391.4 153.2)" />
      <use href="#dot" transform="translate(378.9 163.1)" />
      <use href="#dot" transform="translate(389.5 163.8)" />
      <use href="#dot" transform="translate(399.0 160.7)" />
      <use href="#dot" transform="translate(409.1 158.3)" />
      <use href="#dot" transform="translate(385.5 172.5)" />
      <use href="#dot" transform="translate(396.1 170.8)" />
      <use href="#dot" transform="translate(405.3 167.8)" />
      <use href="#dot" transform="translate(415.9 165.4)" />
      <use href="#dot" transform="translate(392.4 180.3)" />
      <use href="#dot" transform="translate(402.5 177.2)" />
      <use href="#dot" transform="translate(412.4 174.2)" />
      <use href="#lf" transform="translate(427.7 159.5) rotate(18) scale(0.85)" fill="#ecc552"/>
      <use href="#lf" transform="translate(469 145.5) rotate(-65) scale(0.9)" fill="#8fd3cf"/>
      <use href="#lf" transform="translate(423 181) rotate(55) scale(0.85)" fill="#8fd3cf"/>
      <use href="#pf" transform="translate(450.4 161) rotate(-30) scale(1.05)" />
      <use href="#pf" transform="translate(468.5 172) rotate(10)" />
      <use href="#pf" transform="translate(452 181) rotate(-65)" />
      <use href="#lf" transform="translate(490.2 161) rotate(40) scale(1.2)" fill="#e9b83a"/>
      <use href="#ol" transform="translate(507.5 157) rotate(20) scale(1.05)" stroke="#9fd0e2"/>
      <use href="#of" transform="translate(540.5 167) scale(1.5)" stroke="#2f5f88"/>
      <use href="#yf" transform="translate(372 190) rotate(15) scale(0.8)" />
      <use href="#dot" transform="translate(508.6 180.3) scale(0.9)" />
      <use href="#dot" transform="translate(519.2 182.6) scale(0.9)" />
      <use href="#dot" transform="translate(505.1 189.0) scale(0.9)" />
      <use href="#dot" transform="translate(514.5 189.7) scale(0.9)" />
      <use href="#dot" transform="translate(523.5 190.2) scale(0.9)" />
      <use href="#dot" transform="translate(532.2 190.2) scale(0.9)" />
      <use href="#lf" transform="translate(483 190) scale(0.5)" fill="#62a9c9"/>
      <use href="#gg" transform="translate(542 223) rotate(-75) scale(0.95)" />
      <use href="#lf" transform="translate(549 252) rotate(10) scale(0.9)" fill="#ecc552"/>
      <use href="#lf" transform="translate(554 196) rotate(-50) scale(0.8)" fill="#e9b83a"/>
      <use href="#ol" transform="translate(383.5 237.5) rotate(35) scale(0.95)" stroke="#9fd0e2"/>
      <use href="#pf" transform="translate(369 214) rotate(80) scale(0.5)" />
      <use href="#lf" transform="translate(538 259) rotate(-70) scale(0.9)" fill="#8fd3cf"/>
      <use href="#yf" transform="translate(386.0 273.3)" />
      <use href="#yf" transform="translate(406.6 270.9) rotate(20) scale(0.55)" />
      <use href="#dot" transform="translate(431.7 268.8) scale(0.8)" />
      <use href="#dot" transform="translate(447.2 269.9) scale(0.8)" />
      <use href="#ol" transform="translate(450.3 285.3) rotate(-70) scale(0.8)" stroke="#9fd0e2"/>
      <use href="#ol" transform="translate(469.5 276.7) rotate(25) scale(0.9)" stroke="#9fd0e2"/>
      <use href="#lf" transform="translate(504.3 270.9) rotate(10) scale(0.45)" fill="#1f9a6a"/>
      <use href="#dot" transform="translate(528.7 275.0) scale(0.85)" />
      <use href="#dot" transform="translate(540.7 273.3) scale(0.85)" />
      <use href="#dot" transform="translate(519.1 279.1) scale(0.85)" />
      <use href="#dot" transform="translate(534.9 282.9) scale(0.85)" />
      <use href="#dot" transform="translate(546.9 281.2) scale(0.85)" />
      <use href="#dot" transform="translate(517.3 288.8) scale(0.85)" />
      <use href="#dot" transform="translate(527.0 287.1) scale(0.85)" />
      <use href="#dot" transform="translate(525.2 295.0) scale(0.85)" />
      <use href="#dot" transform="translate(534.9 292.9) scale(0.85)" />
      <use href="#dot" transform="translate(544.2 292.2) scale(0.85)" />
      <use href="#dot" transform="translate(517.3 299.8) scale(0.85)" />
      <use href="#pf" transform="translate(414.5 301.8) rotate(185)" />
      <use href="#pf" transform="translate(432.4 295.0) rotate(140)" />
      <use href="#pf" transform="translate(430.7 315.6) rotate(170)" />
      <use href="#yf" transform="translate(487.4 296.3) rotate(10)" />
      <use href="#yf" transform="translate(468.5 314.6) rotate(-10)" />
      <use href="#yf" transform="translate(502.2 316.3) rotate(25)" />
      <use href="#od" transform="translate(391.1 312.8)" stroke="#8fc7dc"/>
      <use href="#of" transform="translate(535.6 319.7) rotate(20) scale(1.25)" stroke="#2f5f88"/>
      <use href="#of" transform="translate(404.9 347.9) scale(1.55)" stroke="#468aad"/>
      <use href="#gg" transform="translate(447.2 346.5) rotate(-20)" />
      <use href="#od" transform="translate(490.2 346.5) rotate(10) scale(1.05)" stroke="#8fc7dc"/>
      <use href="#pf" transform="translate(519.1 354.1) rotate(-105)" />
      <use href="#pf" transform="translate(537.3 352.4) rotate(175)" />
      <use href="#lf" transform="translate(468.5 367.2) rotate(-65) scale(0.9)" fill="#8fd3cf"/>
      <use href="#dot" transform="translate(391.1 374.7) scale(0.85)" />
      <use href="#dot" transform="translate(399.7 381.6) scale(0.85)" />
      <use href="#dot" transform="translate(409.4 379.9) scale(0.85)" />
      <use href="#dot" transform="translate(416.9 385.1) scale(0.85)" />
      <use href="#lf" transform="translate(427.9 379.9) rotate(15) scale(0.9)" fill="#ecc552"/>
      <use href="#pf" transform="translate(449.6 379.9) rotate(-10) scale(0.95)" />
      <use href="#pf" transform="translate(468.5 385.7) rotate(-80) scale(0.8)" />
      <use href="#lf" transform="translate(490.9 379.9) rotate(40)" fill="#e9b83a"/>
      <use href="#ol" transform="translate(507.4 376.5) rotate(20) scale(0.95)" stroke="#9fd0e2"/>
      <use href="#of" transform="translate(532.1 377.5) scale(1.1)" stroke="#2f5f88"/>
      
      <rect x="350" y="133.4" width="230" height="1.6" fill="#14264a" opacity=".45"/>
      <linearGradient id="cupsh" x1="0" x2="1" y1="0" y2="0"><stop offset="0" stop-color="#0a1530" stop-opacity=".35"/><stop offset=".18" stop-color="#0a1530" stop-opacity="0"/><stop offset=".8" stop-color="#0a1530" stop-opacity="0"/><stop offset="1" stop-color="#0a1530" stop-opacity=".4"/></linearGradient>
      <rect x="353" y="134" width="220" height="260" fill="url(#cupsh)"/>
      <path d="M350 122H378Q379 140 374 147Q368 155 362 150L358 136Q350 135 350 122Z" fill="#e25e50"/>
      <path d="M576 122H549Q548 140 553 149Q559 157 564 150L568 136Q576 135 576 122Z" fill="#e25e50"/>
      <path d="M358 128l1.5 1.5M363 131l1.5 1.5M360 136l1.5 1.5M366 137l1.5 1.5M364 143l1.5 1.5" stroke="#7a2a2a" stroke-width="1.1"/>
    </g>
    <linearGradient id="lblg" x1="0" x2="1" y1="0" y2="0"><stop offset="0" stop-color="#d2d3d8"/><stop offset=".35" stop-color="#f4f4f6"/><stop offset=".6" stop-color="#ffffff"/><stop offset=".85" stop-color="#e4e4e8"/><stop offset="1" stop-color="#c9cad1"/></linearGradient>
    <path d="M388.3 192H537.6L530.4 265.7H394.6Z" fill="url(#lblg)"/>
    <use href="#flower" transform="translate(416 193) scale(0.38)"/><use href="#ltext" transform="translate(422.1 196.7) scale(0.3358)" style="fill:#15243f;stroke:#15243f"/>
  </g>
  </svg>
</div>

<!-- RIGHT BAR -->
<div id="right" class="abs">
  <svg class="ri" style="top:9.5px" viewBox="0 0 12 12" fill="none" stroke="#878997" stroke-width="1" stroke-linecap="round" stroke-linejoin="round"><path d="M1.6 4.4H3.6L6.6 2V10L3.6 7.6H1.6Z"/><path d="M8.4 3.6Q9.8 6 8.4 8.4M9.8 2.2Q12 6 9.8 9.8"/></svg>
  <div class="rl" style="top:24.5px">Audio</div>
  <svg class="ri" style="top:44.599999999999994px" viewBox="0 0 12 12" fill="none" stroke="#878997" stroke-width="1" stroke-linecap="round" stroke-linejoin="round"><circle cx="6" cy="6" r="4.6"/><path d="M6 1.4A4.6 4.6 0 0 1 6 10.6Z" fill="#8b8d9b"/></svg>
  <div class="rl" style="top:59.599999999999994px">Colour</div>
  <svg class="ri" style="top:80.7px" viewBox="0 0 12 12" fill="none" stroke="#878997" stroke-width="1" stroke-linecap="round" stroke-linejoin="round"><rect x="1.6" y="1.6" width="8.8" height="8.8" rx="1.4"/><path d="M5 1.6V10.4M5 6H10.4"/></svg>
  <div class="rl" style="top:95.7px">Layout</div>
  <svg class="ri" style="top:116.80000000000001px" viewBox="0 0 12 12" fill="none" stroke="#878997" stroke-width="1" stroke-linecap="round" stroke-linejoin="round"><rect x="2.4" y="2.4" width="7.2" height="7.2"/><path d="M1.2 2.4H3.6M2.4 1.2V3.6M8.4 2.4H10.8M9.6 1.2V3.6M1.2 9.6H3.6M2.4 8.4V10.8M8.4 9.6H10.8M9.6 8.4V10.8" stroke-width=".8"/></svg>
  <div class="rl" style="top:131.8px">Transform</div>
  <svg class="ri" style="top:151px" viewBox="0 0 12 12" fill="none" stroke="#878997" stroke-width="1" stroke-linecap="round" stroke-linejoin="round"><path d="M2 10L8 4" stroke-width="1.5"/><path d="M9.6 1.2V3.2M8.6 2.2H10.6M4 1.8V3M3.4 2.4H4.6M10 6.4V7.6M9.4 7H10.6" stroke-width=".8"/></svg>
  <div class="rl" style="top:166px">Filters</div>
  <svg class="ri" style="top:186px" viewBox="0 0 12 12" fill="none" stroke="#878997" stroke-width="1" stroke-linecap="round" stroke-linejoin="round"><circle cx="6" cy="6" r="4.6"/><path d="M6 1.4V10.6M7.6 1.8V10.2M9.2 2.8V9.2" stroke-width=".7"/></svg>
  <div class="rl" style="top:201px">Fade</div>
  <svg class="ri" style="top:222px" viewBox="0 0 12 12" fill="none" stroke="#878997" stroke-width="1" stroke-linecap="round" stroke-linejoin="round"><path d="M1.6 8Q1.6 3.6 6 3.6Q10.4 3.6 10.4 8"/><path d="M6 8L8.4 5.4" stroke-width="1.2"/><circle cx="6" cy="8" r=".9" fill="#8b8d9b"/></svg>
  <div class="rl" style="top:237px">Speed</div>
  <svg class="ri" style="top:257.5px" viewBox="0 0 12 12" fill="none" stroke="#878997" stroke-width="1" stroke-linecap="round" stroke-linejoin="round"><path d="M2 3.4V1.8H10V3.4M6 1.8V10.2M4.4 10.2H7.6" stroke-width="1.1"/></svg>
  <div class="rl" style="top:272.5px">Text</div>
</div>

<!-- TIMELINE -->
<div id="tl" class="abs">
  <div class="abs" style="left:12px;top:7px;width:16px;height:16px;background:#1e1f2a;border-radius:2px"></div>
  <div class="abs" style="left:34px;top:7px;width:16px;height:16px;background:#1e1f2a;border-radius:2px"></div>
  <div class="abs" style="left:56px;top:7px;width:16px;height:16px;background:#1e1f2a;border-radius:2px"></div>
  <div class="abs" style="left:78.5px;top:7px;width:16px;height:16px;background:#1e1f2a;border-radius:2px"></div>
  <div class="abs" style="left:100.5px;top:7px;width:16px;height:16px;background:#1e1f2a;border-radius:2px"></div>
  <svg class="abs" style="left:12px;top:7px" width="110" height="16" viewBox="217 487 110 16" fill="none" stroke="#9a9cab" stroke-width="1" stroke-linecap="round" stroke-linejoin="round">
    <path d="M222.6 493.2H227Q229.4 493.4 229.4 495.8Q229.4 498.4 226.8 498.4H224.4"/><path d="M224.6 491L222.4 493.2L224.6 495.4"/>
    <path d="M249.4 493.2H245Q242.6 493.4 242.6 495.8Q242.6 498.4 245.2 498.4H247.6"/><path d="M247.4 491L249.6 493.2L247.4 495.4"/>
    <path d="M266.6 490.6L271 497.4M271.4 490.6L267 497.4"/><circle cx="266.4" cy="498.2" r="1.3"/><circle cx="271.6" cy="498.2" r="1.3"/>
    <path d="M288 492.4H295M290.2 492.2Q290.4 490.8 291.5 490.8Q292.6 490.8 292.8 492.2M288.9 492.6L289.5 498.6Q289.6 499.4 290.4 499.4H292.6Q293.4 499.4 293.5 498.6L294.1 492.6M290.8 494.2V497.6M292.2 494.2V497.6" stroke-width=".9"/>
    <path d="M314.4 498.8H311.6Q310.6 498.8 310.6 497.8V491.6Q310.6 490.6 311.6 490.6H314.4L316.4 492.6V494.6M314.2 490.8V492.8H316.2" stroke-width=".9"/><circle cx="315.6" cy="497.4" r="2.3" fill="#9a9cab" stroke="none"/><path d="M314.5 497.4H316.7M315.6 496.3V498.5" stroke="#1f202b" stroke-width=".7"/>
  </svg>
  <div class="abs" style="left:394.5px;top:10px;font-family:'Liberation Mono',monospace;font-size:7.5px;line-height:10px;letter-spacing:.15px;white-space:nowrap;font-weight:bold;color:#e6e7ec">0:04<span style="color:#5d5f6d">.00</span> <span style="color:#5d5f6d">/</span> 1:25<span style="color:#5d5f6d">.00</span></div>
  <div class="abs" style="left:747.5px;top:7px;width:16px;height:16px;background:#1e1f2a;border-radius:2px"></div>
  <div class="abs" style="left:769.5px;top:7px;width:16px;height:16px;background:#1e1f2a;border-radius:2px"></div>
  <div class="abs" style="left:792px;top:7px;width:16px;height:16px;background:#1e1f2a;border-radius:2px"></div>
  <svg class="abs" style="left:747px;top:7px" width="70" height="16" viewBox="952 487 70 16" fill="none" stroke="#a4a6b3" stroke-width="1" stroke-linecap="round" stroke-linejoin="round">
    <path d="M956.5 494H964.5M960.5 490V498"/><path d="M978.6 494H986.4"/>
    <path d="M1008.6 490.4L1006 493M1006 493V491M1006 493H1008M1001.4 497.6L1004 495M1004 495V497M1004 495H1002"/>
  </svg>
  <div class="abs" style="left:0;top:29px;width:819px;height:1px;background:#2a2b36"></div>
</div>
<!-- RULER / TRACKS -->
<div class="rt" style="left:213px">0</div>
<div class="rt" style="left:389px">0:02</div>
<div class="rt" style="left:544.5px">0:04</div>
<div class="rt" style="left:700px">0:06</div>
<div class="rt" style="left:856px">0:08</div>
<div class="rt" style="left:1011.5px">0:1</div>
<div class="abs" style="left:301.5px;top:516px;width:1px;height:3px;background:#2e2f3b"></div>
<div class="abs" style="left:470px;top:516px;width:1px;height:3px;background:#2e2f3b"></div>
<div class="abs" style="left:625px;top:516px;width:1px;height:3px;background:#2e2f3b"></div>
<div class="abs" style="left:781px;top:516px;width:1px;height:3px;background:#2e2f3b"></div>
<div class="abs" style="left:937px;top:516px;width:1px;height:3px;background:#2e2f3b"></div>
<div class="abs" style="left:212px;top:531px;width:812px;height:17px;background:#1b1c26"></div><div class="abs" style="left:205px;top:630px;width:819px;height:10px;background:#16171e"></div>
<div class="ttrack" style="left:212.5px;top:551px;width:174.8px">FruiTea</div><svg class="abs" style="left:218.5px;top:555px" width="8" height="9" viewBox="0 0 8 9" fill="none" stroke="#b9aef7" stroke-width=".9" stroke-linecap="round"><path d="M1 2.4V1.2H7V2.4M4 1.2V7.8M2.8 7.8H5.2"/></svg>
<div class="ttrack" style="left:389px;top:551px;width:151.5px">Color Palette</div><svg class="abs" style="left:395px;top:555px" width="8" height="9" viewBox="0 0 8 9" fill="none" stroke="#b9aef7" stroke-width=".9" stroke-linecap="round"><path d="M1 2.4V1.2H7V2.4M4 1.2V7.8M2.8 7.8H5.2"/></svg>
<div class="ttrack" style="left:699.6px;top:551px;width:153.89999999999998px">Spicy Punch</div><svg class="abs" style="left:705.6px;top:555px" width="8" height="9" viewBox="0 0 8 9" fill="none" stroke="#b9aef7" stroke-width=".9" stroke-linecap="round"><path d="M1 2.4V1.2H7V2.4M4 1.2V7.8M2.8 7.8H5.2"/></svg>
<div class="vtrack" style="left:212px;width:175.3px"><svg width="175.3" height="36" style="display:block"><rect width="176" height="36" fill="#fdfdfd"/><use href="#logo" transform="translate(14.7 0.6) scale(0.172)"/><use href="#logo" transform="translate(70.8 0.6) scale(0.172)"/><use href="#logo" transform="translate(121.4 0.6) scale(0.172)"/></svg></div>
<div class="vtrack" style="left:389px;width:151.5px"><svg width="151.5" height="36" style="display:block"><svg x="0.0" y="0" width="26.9" height="36" viewBox="0 0 30 37.5" preserveAspectRatio="none"><use href="#t_pal" width="66" height="37.5"/></svg><svg x="26.9" y="0" width="38.5" height="36" viewBox="30 0 36 37.5" preserveAspectRatio="none"><use href="#t_pal" width="66" height="37.5"/></svg><svg x="65.4" y="0" width="25.6" height="36" viewBox="0 0 30 37.5" preserveAspectRatio="none"><use href="#t_pal" width="66" height="37.5"/></svg><svg x="91.0" y="0" width="37.9" height="36" viewBox="30 0 36 37.5" preserveAspectRatio="none"><use href="#t_pal" width="66" height="37.5"/></svg><svg x="128.9" y="0" width="22.6" height="36" viewBox="0 0 26 37.5" preserveAspectRatio="none"><use href="#t_pal" width="66" height="37.5"/></svg></svg></div>
<div class="vtrack" style="left:543.5px;width:154.5px"><svg width="154.5" height="36" style="display:block"><svg x="0.0" y="0" width="29.9" height="36" viewBox="1 0 30 37.5" preserveAspectRatio="none"><use href="#t_cupm" width="66" height="37.5"/></svg><svg x="29.9" y="0" width="30.5" height="36" viewBox="34.5 0 31 37.5" preserveAspectRatio="none"><use href="#t_cupm" width="66" height="37.5"/></svg><svg x="60.4" y="0" width="31.1" height="36" viewBox="1 0 30 37.5" preserveAspectRatio="none"><use href="#t_cupm" width="66" height="37.5"/></svg><svg x="91.5" y="0" width="31.4" height="36" viewBox="34.5 0 31 37.5" preserveAspectRatio="none"><use href="#t_cupm" width="66" height="37.5"/></svg><svg x="122.9" y="0" width="31.6" height="36" viewBox="1 0 30 37.5" preserveAspectRatio="none"><use href="#t_cupm" width="66" height="37.5"/></svg></svg></div>
<div class="vtrack" style="left:699.6px;width:153.0px"><svg width="153.0" height="36" style="display:block"><svg x="0.0" y="0" width="28.2" height="36" viewBox="0 0 28 37.5" preserveAspectRatio="none"><use href="#t_spicy" width="66" height="37.5"/></svg><svg x="28.2" y="0" width="34.4" height="36" viewBox="4 0 58 37.5" preserveAspectRatio="none"><use href="#t_navy" width="66" height="37.5"/></svg><svg x="62.6" y="0" width="27.8" height="36" viewBox="0 0 28 37.5" preserveAspectRatio="none"><use href="#t_spicy" width="66" height="37.5"/></svg><svg x="90.4" y="0" width="35.3" height="36" viewBox="4 0 58 37.5" preserveAspectRatio="none"><use href="#t_navy" width="66" height="37.5"/></svg><svg x="125.7" y="0" width="27.3" height="36" viewBox="0 0 28 37.5" preserveAspectRatio="none"><use href="#t_spicy" width="66" height="37.5"/></svg></svg></div>
<div class="vtrack" style="left:854.2px;width:155.8px"><svg width="155.8" height="36" style="display:block"><svg x="0.0" y="0" width="27.3" height="36" viewBox="0 0 27 37.5" preserveAspectRatio="none"><use href="#t_good" width="66" height="37.5"/></svg><svg x="27.3" y="0" width="35.5" height="36" viewBox="27 0 39 37.5" preserveAspectRatio="none"><use href="#t_good" width="66" height="37.5"/></svg><svg x="62.8" y="0" width="27.0" height="36" viewBox="0 0 27 37.5" preserveAspectRatio="none"><use href="#t_good" width="66" height="37.5"/></svg><svg x="89.8" y="0" width="36.2" height="36" viewBox="27 0 39 37.5" preserveAspectRatio="none"><use href="#t_good" width="66" height="37.5"/></svg><svg x="126.0" y="0" width="25.8" height="36" viewBox="0 0 27 37.5" preserveAspectRatio="none"><use href="#t_good" width="66" height="37.5"/></svg><svg x="151.8" y="0" width="4.0" height="36" viewBox="27 0 5 37.5" preserveAspectRatio="none"><use href="#t_good" width="66" height="37.5"/></svg></svg></div>
<div class="vtrack" style="left:1011.7px;width:16.3px"><svg width="16.3" height="36" style="display:block"><svg x="0.0" y="0" width="16.3" height="36" viewBox="0 0 17 37.5" preserveAspectRatio="none"><use href="#t_persona" width="66" height="37.5"/></svg></svg></div>
<div class="abs" style="left:212.5px;top:611.5px;width:815px;height:17px;background:#3a70dc;border-radius:2.5px 0 0 2.5px"></div>
<svg class="abs" style="left:212.5px;top:611.5px" width="812" height="17" viewBox="212.5 611.5 812 17"><g fill="#5a88e6"><path d="M326.0 620L328.4 617.3H330.2L332.6 620L330.2 622.7H328.4Z"/><path d="M333.4 620L335.8 617.0H337.6L340.0 620L337.6 623.0H335.8Z"/><path d="M340.8 620L343.2 616.8H345.0L347.4 620L345.0 623.2H343.2Z"/><path d="M348.2 620L350.6 616.8H352.4L354.8 620L352.4 623.2H350.6Z"/><path d="M355.6 620L358.0 617.4H359.8L362.2 620L359.8 622.6H358.0Z"/><path d="M363.0 620L365.4 616.8H367.2L369.6 620L367.2 623.2H365.4Z"/><path d="M370.4 620L372.8 616.4H374.6L377.0 620L374.6 623.6H372.8Z"/><path d="M377.8 620L380.2 617.9H382.0L384.4 620L382.0 622.1H380.2Z"/><path d="M385.2 620L387.6 617.0H389.4L391.8 620L389.4 623.0H387.6Z"/><path d="M392.6 620L395.0 616.2H396.8L399.2 620L396.8 623.8H395.0Z"/><path d="M400.0 620L402.4 617.4H404.2L406.6 620L404.2 622.6H402.4Z"/><path d="M407.4 620L409.8 617.4H411.6L414.0 620L411.6 622.6H409.8Z"/><path d="M414.8 620L417.2 616.2H419.0L421.4 620L419.0 623.8H417.2Z"/><path d="M422.2 620L424.6 617.1H426.4L428.8 620L426.4 622.9H424.6Z"/><path d="M429.6 620L432.0 617.9H433.8L436.2 620L433.8 622.1H432.0Z"/><path d="M437.0 620L439.4 616.4H441.2L443.6 620L441.2 623.6H439.4Z"/><path d="M444.4 620L446.8 616.8H448.6L451.0 620L448.6 623.2H446.8Z"/><path d="M451.8 620L454.2 617.5H456.0L458.4 620L456.0 622.5H454.2Z"/><path d="M459.2 620L461.6 616.8H463.4L465.8 620L463.4 623.2H461.6Z"/><path d="M466.6 620L469.0 616.8H470.8L473.2 620L470.8 623.2H469.0Z"/><path d="M474.0 620L476.4 617.1H478.2L480.6 620L478.2 622.9H476.4Z"/><path d="M481.4 620L483.8 617.2H485.6L488.0 620L485.6 622.8H483.8Z"/><path d="M488.8 620L491.2 617.0H493.0L495.4 620L493.0 623.0H491.2Z"/><path d="M496.2 620L498.6 616.8H500.4L502.8 620L500.4 623.2H498.6Z"/><path d="M503.6 620L506.0 616.9H507.8L510.2 620L507.8 623.1H506.0Z"/><path d="M511.0 620L513.4 617.4H515.2L517.6 620L515.2 622.6H513.4Z"/><path d="M518.4 620L520.8 616.8H522.6L525.0 620L522.6 623.2H520.8Z"/><path d="M525.8 620L528.2 616.5H530.0L532.4 620L530.0 623.5H528.2Z"/><path d="M533.2 620L535.6 617.8H537.4L539.8 620L537.4 622.2H535.6Z"/><path d="M540.6 620L543.0 617.0H544.8L547.2 620L544.8 623.0H543.0Z"/><path d="M548.0 620L550.4 616.2H552.2L554.6 620L552.2 623.8H550.4Z"/><path d="M555.4 620L557.8 617.5H559.6L562.0 620L559.6 622.5H557.8Z"/><path d="M562.8 620L565.2 617.3H567.0L569.4 620L567.0 622.7H565.2Z"/><path d="M570.2 620L572.6 616.2H574.4L576.8 620L574.4 623.8H572.6Z"/><path d="M577.6 620L580.0 617.1H581.8L584.2 620L581.8 622.9H580.0Z"/><path d="M585.0 620L587.4 617.8H589.2L591.6 620L589.2 622.2H587.4Z"/><path d="M592.4 620L594.8 616.4H596.6L599.0 620L596.6 623.6H594.8Z"/><path d="M599.8 620L602.2 616.9H604.0L606.4 620L604.0 623.1H602.2Z"/><path d="M607.2 620L609.6 617.5H611.4L613.8 620L611.4 622.5H609.6Z"/><path d="M614.6 620L617.0 616.7H618.8L621.2 620L618.8 623.3H617.0Z"/><path d="M622.0 620L624.4 616.8H626.2L628.6 620L626.2 623.2H624.4Z"/><path d="M629.4 620L631.8 617.1H633.6L636.0 620L633.6 622.9H631.8Z"/><path d="M636.8 620L639.2 617.2H641.0L643.4 620L641.0 622.8H639.2Z"/><path d="M644.2 620L646.6 617.0H648.4L650.8 620L648.4 623.0H646.6Z"/><path d="M651.6 620L654.0 616.9H655.8L658.2 620L655.8 623.1H654.0Z"/><path d="M659.0 620L661.4 616.9H663.2L665.6 620L663.2 623.1H661.4Z"/><path d="M666.4 620L668.8 617.3H670.6L673.0 620L670.6 622.7H668.8Z"/><path d="M673.8 620L676.2 616.8H678.0L680.4 620L678.0 623.2H676.2Z"/><path d="M681.2 620L683.6 616.5H685.4L687.8 620L685.4 623.5H683.6Z"/><path d="M688.6 620L691.0 617.8H692.8L695.2 620L692.8 622.2H691.0Z"/><path d="M696.0 620L698.4 617.0H700.2L702.6 620L700.2 623.0H698.4Z"/><path d="M703.4 620L705.8 616.3H707.6L710.0 620L707.6 623.7H705.8Z"/><path d="M710.8 620L713.2 617.5H715.0L717.4 620L715.0 622.5H713.2Z"/><path d="M718.2 620L720.6 617.3H722.4L724.8 620L722.4 622.7H720.6Z"/><path d="M725.6 620L728.0 616.2H729.8L732.2 620L729.8 623.8H728.0Z"/><path d="M733.0 620L735.4 617.1H737.2L739.6 620L737.2 622.9H735.4Z"/><path d="M740.4 620L742.8 617.8H744.6L747.0 620L744.6 622.2H742.8Z"/><path d="M747.8 620L750.2 616.4H752.0L754.4 620L752.0 623.6H750.2Z"/><path d="M755.2 620L757.6 616.9H759.4L761.8 620L759.4 623.1H757.6Z"/><path d="M762.6 620L765.0 617.6H766.8L769.2 620L766.8 622.4H765.0Z"/><path d="M770.0 620L772.4 616.7H774.2L776.6 620L774.2 623.3H772.4Z"/><path d="M777.4 620L779.8 616.8H781.6L784.0 620L781.6 623.2H779.8Z"/><path d="M784.8 620L787.2 617.2H789.0L791.4 620L789.0 622.8H787.2Z"/><path d="M792.2 620L794.6 617.1H796.4L798.8 620L796.4 622.9H794.6Z"/><path d="M799.6 620L802.0 616.9H803.8L806.2 620L803.8 623.1H802.0Z"/><path d="M807.0 620L809.4 616.9H811.2L813.6 620L811.2 623.1H809.4Z"/><path d="M814.4 620L816.8 617.0H818.6L821.0 620L818.6 623.0H816.8Z"/><path d="M821.8 620L824.2 617.3H826.0L828.4 620L826.0 622.7H824.2Z"/><path d="M829.2 620L831.6 616.8H833.4L835.8 620L833.4 623.2H831.6Z"/><path d="M836.6 620L839.0 616.6H840.8L843.2 620L840.8 623.4H839.0Z"/><path d="M844.0 620L846.4 617.7H848.2L850.6 620L848.2 622.3H846.4Z"/><path d="M851.4 620L853.8 616.9H855.6L858.0 620L855.6 623.1H853.8Z"/><path d="M858.8 620L861.2 616.3H863.0L865.4 620L863.0 623.7H861.2Z"/><path d="M866.2 620L868.6 617.6H870.4L872.8 620L870.4 622.4H868.6Z"/><path d="M873.6 620L876.0 617.3H877.8L880.2 620L877.8 622.7H876.0Z"/><path d="M881.0 620L883.4 616.2H885.2L887.6 620L885.2 623.8H883.4Z"/><path d="M888.4 620L890.8 617.2H892.6L895.0 620L892.6 622.8H890.8Z"/><path d="M895.8 620L898.2 617.7H900.0L902.4 620L900.0 622.3H898.2Z"/><path d="M903.2 620L905.6 616.3H907.4L909.8 620L907.4 623.7H905.6Z"/><path d="M910.6 620L913.0 616.9H914.8L917.2 620L914.8 623.1H913.0Z"/><path d="M918.0 620L920.4 617.6H922.2L924.6 620L922.2 622.4H920.4Z"/><path d="M925.4 620L927.8 616.6H929.6L932.0 620L929.6 623.4H927.8Z"/><path d="M932.8 620L935.2 616.8H937.0L939.4 620L937.0 623.2H935.2Z"/><path d="M940.2 620L942.6 617.2H944.4L946.8 620L944.4 622.8H942.6Z"/><path d="M947.6 620L950.0 617.1H951.8L954.2 620L951.8 622.9H950.0Z"/><path d="M955.0 620L957.4 616.9H959.2L961.6 620L959.2 623.1H957.4Z"/><path d="M962.4 620L964.8 616.9H966.6L969.0 620L966.6 623.1H964.8Z"/><path d="M969.8 620L972.2 617.0H974.0L976.4 620L974.0 623.0H972.2Z"/><path d="M977.2 620L979.6 617.2H981.4L983.8 620L981.4 622.8H979.6Z"/><path d="M984.6 620L987.0 616.8H988.8L991.2 620L988.8 623.2H987.0Z"/><path d="M992.0 620L994.4 616.6H996.2L998.6 620L996.2 623.4H994.4Z"/><path d="M999.4 620L1001.8 617.7H1003.6L1006.0 620L1003.6 622.3H1001.8Z"/><path d="M1006.8 620L1009.2 616.9H1011.0L1013.4 620L1011.0 623.1H1009.2Z"/><path d="M1014.2 620L1016.6 616.3H1018.4L1020.8 620L1018.4 623.7H1016.6Z"/><path d="M1021.6 620L1024.0 617.7H1025.8L1028.2 620L1025.8 622.3H1024.0Z"/><rect x="326" y="619.6" width="700" height=".8"/></g><path d="M220.6 623V617.4L224.4 616.6V622" fill="none" stroke="#bcd2fa" stroke-width=".8"/><circle cx="219.8" cy="623" r="1" fill="#bcd2fa"/><circle cx="223.6" cy="622" r="1" fill="#bcd2fa"/></svg>
<div class="abs" style="left:229px;top:615px;font-size:7.5px;line-height:10px;font-weight:bold;color:#fff;white-space:nowrap">Upbeat Funky Good Times</div>
<div class="abs" style="left:541.5px;top:514px;width:1.6px;height:126px;background:#fff"></div>
<svg class="abs" style="left:538px;top:510px" width="9" height="9" viewBox="0 0 9 9"><path d="M1 1.6Q1 .6 2 .6H6.6Q7.6 .6 7.6 1.6V4.4L4.3 7.6L1 4.4Z" fill="#fff"/></svg>
<!-- PLAYBACK -->
<svg class="abs" style="left:580px;top:434px" width="110" height="22" viewBox="580 434 110 22" fill="#f1f1f5" stroke="none">
  <rect x="587.3" y="439.8" width="1.5" height="9"/><path d="M596 439.8V448.8L589.6 444.3Z"/>
  <path d="M609.6 441.2A4.6 4.6 0 1 1 608.6 445" fill="none" stroke="#f1f1f5" stroke-width="1.2" stroke-linecap="round"/><path d="M607.6 441.9L610.6 439.2L611 442.8Z"/><rect x="612.6" y="443" width="1.3" height="3.6"/>
  <path d="M631 439.2L641.4 444.5L631 449.8Z" stroke="#f1f1f5" stroke-width="1" stroke-linejoin="round"/>
  <path d="M660.6 441.2A4.6 4.6 0 1 0 661.6 445" fill="none" stroke="#f1f1f5" stroke-width="1.2" stroke-linecap="round"/><path d="M662.6 441.9L659.6 439.2L659.2 442.8Z"/><rect x="656.3" y="443" width="1.3" height="3.6"/>
  <rect x="681.4" y="439.8" width="1.5" height="9"/><path d="M674.2 439.8V448.8L680.6 444.3Z"/>
</svg>
<svg class="abs" style="left:942px;top:439px" width="10" height="10" viewBox="0 0 10 10" fill="none" stroke="#d9dae0" stroke-width="1" stroke-linecap="round" stroke-linejoin="round"><path d="M1.4 3.4V1.4H3.4M6.6 1.4H8.6V3.4M8.6 6.6V8.6H6.6M3.4 8.6H1.4V6.6"/></svg>
<!-- collapse handles -->
<div class="abs" style="left:204px;top:359px;width:8px;height:20px;background:#22232e;border-radius:0 4px 4px 0"></div>
<svg class="abs" style="left:205.5px;top:365.5px" width="5" height="7" viewBox="0 0 5 7" fill="none" stroke="#c9cad2" stroke-width="1" stroke-linecap="round" stroke-linejoin="round"><path d="M3.6 1.2L1.4 3.5L3.6 5.8"/></svg>
<div class="abs" style="left:1018px;top:228px;width:6px;height:18px;background:#1f202a;border-radius:3px 0 0 3px"></div>
<div class="abs" style="left:992.5px;top:472.5px;width:23.5px;height:8px;background:#20212b;border-radius:3px 3px 0 0"></div>
<svg class="abs" style="left:1001px;top:473.5px" width="8" height="6" viewBox="0 0 8 6" fill="none" stroke="#d9dae0" stroke-width="1" stroke-linecap="round" stroke-linejoin="round"><path d="M1.6 1.6L4 4L6.4 1.6"/></svg>


</div>
</body>
</html>
